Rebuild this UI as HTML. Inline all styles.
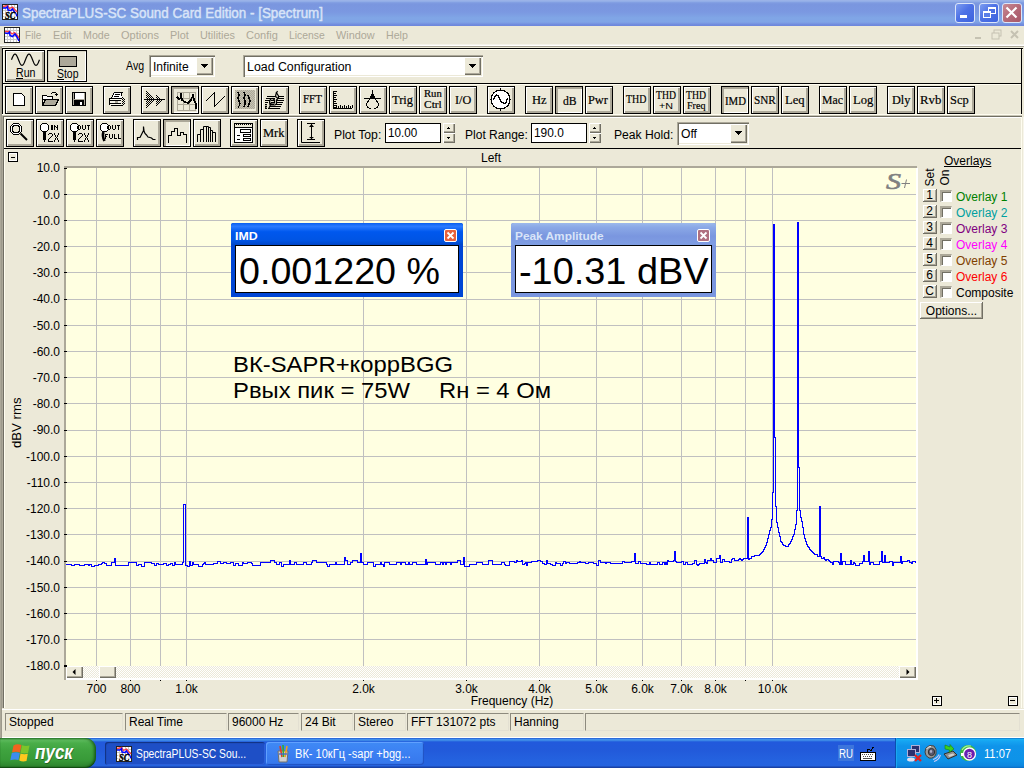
<!DOCTYPE html><html><head><meta charset="utf-8"><style>
html,body{margin:0;padding:0;width:1024px;height:768px;overflow:hidden;background:#ECE9D8;}
body{position:relative;font-family:"Liberation Sans",sans-serif;}
div{position:absolute;box-sizing:content-box;}
svg{position:absolute;}
.bn{background:#ECE9D8;border:1px solid #000;box-shadow:inset 1px 1px 0 #fff, inset -2px -2px 0 #ACA899;padding:1px;}
.bp{background:#ECE9D8;border:1px solid #000;box-shadow:inset 2px 2px 0 #ACA899, inset -1px -1px 0 #fff;padding:1px;}
.sunk{background:#fff;box-shadow:inset 1px 1px 0 #ACA899, inset 2px 2px 0 #716F64, inset -1px -1px 0 #fff, inset -2px -2px 0 #ECE9D8;}
.lbl{font-family:"Liberation Serif",serif;color:#000;text-align:center;}
</style></head><body>

<div style="left:0px;top:0px;width:1024px;height:26px;background:linear-gradient(to bottom,#97AEE6 0px,#9DB7EA 1px,#86A3E4 2px,#7A96DF 4px,#7B98E1 12px,#80A6E6 18px,#80A4E6 22px,#7591E0 24px,#6E88DC 25px,#6E88DC 26px);"></div>
<svg style="position:absolute;left:2px;top:4px" width="16" height="16" viewBox="0 0 16 16"  shape-rendering="auto"><rect x="0" y="0" width="16" height="16" fill="#222"/><rect x="1" y="1" width="14" height="14" fill="#fff"/><rect x="3" y="1" width="1" height="14" fill="#C8C8C8"/><rect x="1" y="3" width="14" height="1" fill="#C8C8C8"/><rect x="6" y="1" width="1" height="14" fill="#C8C8C8"/><rect x="1" y="6" width="14" height="1" fill="#C8C8C8"/><rect x="9" y="1" width="1" height="14" fill="#C8C8C8"/><rect x="1" y="9" width="14" height="1" fill="#C8C8C8"/><rect x="12" y="1" width="1" height="14" fill="#C8C8C8"/><rect x="1" y="12" width="14" height="1" fill="#C8C8C8"/><polyline points="1,2.5 5.5,1.5 7.5,4.5 10.5,3 15,8" fill="none" stroke="#FF4040" stroke-width="1.3"/><polyline points="1,4 4,4 5.5,2.5 6,6 9,6.5 10.5,5 13.5,9.5 15,12" fill="none" stroke="#0000FF" stroke-width="1.5"/><rect x="2" y="9" width="12" height="6" fill="#fff" opacity="0.6"/><text x="3" y="14.8" font-family="Liberation Serif" font-style="italic" font-weight="bold" font-size="9.5" fill="#000" stroke="#000" stroke-width="0.4" textLength="10.5" lengthAdjust="spacingAndGlyphs">SC</text></svg>
<svg style="position:absolute;left:20px;top:2px" width="305" height="20"><text x="2" y="16" font-family="Liberation Sans" font-weight="normal" font-style="normal" font-size="14" fill="#D8E4F8" stroke="#D8E4F8" stroke-width="0.45" textLength="301" lengthAdjust="spacingAndGlyphs">SpectraPLUS-SC Sound Card Edition - [Spectrum]</text></svg>
<div style="left:955px;top:3px;width:18px;height:18px;border:1px solid #DCE6FA;border-radius:3px;background:linear-gradient(135deg,#7D9DF0 0%,#4E72E6 45%,#3C62DE 100%);"></div>
<div style="left:979px;top:3px;width:18px;height:18px;border:1px solid #DCE6FA;border-radius:3px;background:linear-gradient(135deg,#7D9DF0 0%,#4E72E6 45%,#3C62DE 100%);"></div>
<div style="left:1002px;top:3px;width:18px;height:18px;border:1px solid #DCE6FA;border-radius:3px;background:linear-gradient(135deg,#C88A94 0%,#B56A78 50%,#A85868 100%);"></div>
<svg style="position:absolute;left:955px;top:3px" width="21" height="21" viewBox="0 0 21 21" shape-rendering="crispEdges" ><rect x="5" y="12" width="7" height="3" fill="#fff"/></svg>
<svg style="position:absolute;left:979px;top:3px" width="21" height="21" viewBox="0 0 21 21"  shape-rendering="crispEdges"><rect x="9.5" y="4.5" width="7" height="6" fill="none" stroke="#fff" stroke-width="1"/><rect x="9" y="4" width="8" height="2" fill="#fff"/><rect x="4.5" y="8.5" width="7" height="6" fill="#5A7EE8" stroke="#fff" stroke-width="1"/><rect x="4" y="8" width="8" height="2" fill="#fff"/></svg>
<svg style="position:absolute;left:1002px;top:3px" width="21" height="21" viewBox="0 0 21 21"  shape-rendering="auto"><path d="M4.5,4.5 L14.5,14.5 M14.5,4.5 L4.5,14.5" stroke="#fff" stroke-width="2.2"/></svg>
<div style="left:0px;top:26px;width:1024px;height:19px;background:#ECE9D8;"></div>
<svg style="position:absolute;left:4px;top:27px" width="16" height="16" viewBox="0 0 16 16"  shape-rendering="auto"><rect x="0" y="0" width="16" height="16" fill="#222"/><rect x="1" y="1" width="14" height="14" fill="#fff"/><rect x="3" y="1" width="1" height="14" fill="#C8C8C8"/><rect x="1" y="3" width="14" height="1" fill="#C8C8C8"/><rect x="6" y="1" width="1" height="14" fill="#C8C8C8"/><rect x="1" y="6" width="14" height="1" fill="#C8C8C8"/><rect x="9" y="1" width="1" height="14" fill="#C8C8C8"/><rect x="1" y="9" width="14" height="1" fill="#C8C8C8"/><rect x="12" y="1" width="1" height="14" fill="#C8C8C8"/><rect x="1" y="12" width="14" height="1" fill="#C8C8C8"/><polyline points="1,4.5 5.5,4.3 8,7 10.5,5.5 13.5,8.5 15,11" fill="none" stroke="#FF4040" stroke-width="1.3"/><polyline points="1,6 4,6.5 5.5,5 6,8.5 8.5,9.5 11,7 13,10 15,14" fill="none" stroke="#0000FF" stroke-width="1.5"/><rect x="1" y="15" width="14" height="1" fill="#222"/></svg>
<svg style="position:absolute;left:23.2px;top:25.9px" width="20.3" height="17"><text x="2" y="13" font-family="Liberation Sans" font-weight="normal" font-style="normal" font-size="11" fill="#ACA899" textLength="16.3" lengthAdjust="spacingAndGlyphs">File</text></svg>
<svg style="position:absolute;left:50.8px;top:25.9px" width="22.700000000000003" height="17"><text x="2" y="13" font-family="Liberation Sans" font-weight="normal" font-style="normal" font-size="11" fill="#ACA899" textLength="18.700000000000003" lengthAdjust="spacingAndGlyphs">Edit</text></svg>
<svg style="position:absolute;left:80.8px;top:25.9px" width="30.700000000000003" height="17"><text x="2" y="13" font-family="Liberation Sans" font-weight="normal" font-style="normal" font-size="11" fill="#ACA899" textLength="26.700000000000003" lengthAdjust="spacingAndGlyphs">Mode</text></svg>
<svg style="position:absolute;left:118.9px;top:25.9px" width="41.900000000000006" height="17"><text x="2" y="13" font-family="Liberation Sans" font-weight="normal" font-style="normal" font-size="11" fill="#ACA899" textLength="37.900000000000006" lengthAdjust="spacingAndGlyphs">Options</text></svg>
<svg style="position:absolute;left:167.7px;top:25.9px" width="22.700000000000017" height="17"><text x="2" y="13" font-family="Liberation Sans" font-weight="normal" font-style="normal" font-size="11" fill="#ACA899" textLength="18.700000000000017" lengthAdjust="spacingAndGlyphs">Plot</text></svg>
<svg style="position:absolute;left:197.7px;top:25.9px" width="39.0" height="17"><text x="2" y="13" font-family="Liberation Sans" font-weight="normal" font-style="normal" font-size="11" fill="#ACA899" textLength="35.0" lengthAdjust="spacingAndGlyphs">Utilities</text></svg>
<svg style="position:absolute;left:244.0px;top:25.9px" width="35.80000000000001" height="17"><text x="2" y="13" font-family="Liberation Sans" font-weight="normal" font-style="normal" font-size="11" fill="#ACA899" textLength="31.80000000000001" lengthAdjust="spacingAndGlyphs">Config</text></svg>
<svg style="position:absolute;left:286.7px;top:25.9px" width="39.80000000000001" height="17"><text x="2" y="13" font-family="Liberation Sans" font-weight="normal" font-style="normal" font-size="11" fill="#ACA899" textLength="35.80000000000001" lengthAdjust="spacingAndGlyphs">License</text></svg>
<svg style="position:absolute;left:333.8px;top:25.9px" width="42.69999999999999" height="17"><text x="2" y="13" font-family="Liberation Sans" font-weight="normal" font-style="normal" font-size="11" fill="#ACA899" textLength="38.69999999999999" lengthAdjust="spacingAndGlyphs">Window</text></svg>
<svg style="position:absolute;left:383.9px;top:25.9px" width="25.900000000000034" height="17"><text x="2" y="13" font-family="Liberation Sans" font-weight="normal" font-style="normal" font-size="11" fill="#ACA899" textLength="21.900000000000034" lengthAdjust="spacingAndGlyphs">Help</text></svg>
<svg style="position:absolute;left:972px;top:27px" width="50" height="17" viewBox="0 0 50 17"  shape-rendering="auto"><rect x="3" y="10" width="6" height="2" fill="#C5C2B2"/><rect x="22" y="3" width="7" height="6" fill="none" stroke="#C5C2B2"/><rect x="20" y="6" width="7" height="6" fill="#ECE9D8" stroke="#C5C2B2"/><path d="M39,4 L46,11 M46,4 L39,11" stroke="#C5C2B2" stroke-width="2"/></svg>
<div style="left:0px;top:44px;width:1024px;height:1px;background:#F5F3EA;"></div>
<div style="left:0px;top:45px;width:1024px;height:1px;background:#fff;"></div>
<div style="left:0px;top:46px;width:1024px;height:1px;background:#ACA899;"></div>
<div style="left:0px;top:47px;width:1024px;height:689px;background:#ECE9D8;"></div>
<div style="left:0px;top:47px;width:1px;height:689px;background:#ACA899;"></div>
<div style="left:1px;top:47px;width:1px;height:689px;background:#9D9A8C;"></div>
<div style="left:2px;top:48px;width:1020px;height:68px;border-left:1px solid #000;border-top:1px solid #000;box-shadow:inset 1px 1px 0 #FFFDF0;"></div>
<div style="left:2px;top:83px;width:1019px;height:1px;background:#000;"></div>
<div style="left:3px;top:84px;width:1018px;height:1px;background:#FFFDF0;"></div>
<div style="left:1021px;top:48px;width:1px;height:68px;background:#000;"></div>
<div style="left:2px;top:114px;width:1020px;height:1px;background:#FFFDF0;"></div>
<div style="left:2px;top:115px;width:1020px;height:1px;background:#C8C5B5;"></div>
<div style="left:2px;top:116px;width:1020px;height:1px;background:#716F64;"></div>
<div style="left:4px;top:117px;width:1018px;height:1px;background:#fff;"></div>
<div style="left:2px;top:116px;width:1px;height:620px;background:#ACA899;"></div>
<div style="left:3px;top:116px;width:1px;height:620px;background:#716F64;"></div>
<div style="left:4px;top:117px;width:1px;height:619px;background:#FFFDF0;"></div>
<div class="bn" style="left:5px;top:50px;width:36px;height:28px"></div>
<svg style="position:absolute;left:0px;top:48px" width="50" height="25" viewBox="0 0 50 25"  shape-rendering="auto"><polyline points="11.50,11.70 11.75,11.07 12.00,10.45 12.25,9.85 12.50,9.27 12.75,8.72 13.00,8.21 13.25,7.74 13.50,7.32 13.75,6.96 14.00,6.65 14.25,6.41 14.50,6.24 14.75,6.14 15.00,6.10 15.25,6.14 15.50,6.24 15.75,6.41 16.00,6.65 16.25,6.96 16.50,7.32 16.75,7.74 17.00,8.21 17.25,8.72 17.50,9.27 17.75,9.85 18.00,10.45 18.25,11.07 18.50,11.70 18.75,12.33 19.00,12.95 19.25,13.55 19.50,14.13 19.75,14.68 20.00,15.19 20.25,15.66 20.50,16.08 20.75,16.44 21.00,16.75 21.25,16.99 21.50,17.16 21.75,17.26 22.00,17.30 22.25,17.26 22.50,17.16 22.75,16.99 23.00,16.75 23.25,16.44 23.50,16.08 23.75,15.66 24.00,15.19 24.25,14.68 24.50,14.13 24.75,13.55 25.00,12.95 25.25,12.33 25.50,11.70 25.75,11.07 26.00,10.45 26.25,9.85 26.50,9.27 26.75,8.72 27.00,8.21 27.25,7.74 27.50,7.32 27.75,6.96 28.00,6.65 28.25,6.41 28.50,6.24 28.75,6.14 29.00,6.10 29.25,6.14 29.50,6.24 29.75,6.41 30.00,6.65 30.25,6.96 30.50,7.32 30.75,7.74 31.00,8.21 31.25,8.72 31.50,9.27 31.75,9.85 32.00,10.45 32.25,11.07 32.50,11.70 32.75,12.33 33.00,12.95 33.25,13.55 33.50,14.13 33.75,14.68 34.00,15.19 34.25,15.66 34.50,16.08 34.75,16.44 35.00,16.75 35.25,16.99 35.50,17.16 35.75,17.26 36.00,17.30 36.25,17.26 36.50,17.16 36.75,16.99 37.00,16.75 37.25,16.44 37.50,16.08 37.75,15.66 38.00,15.19 38.25,14.68 38.50,14.13 38.75,13.55 39.00,12.95 39.25,12.33 39.50,11.70" fill="none" stroke="#000" stroke-width="1.2"/></svg>
<svg style="position:absolute;left:14px;top:62.8px" width="23.5" height="18"><text x="2" y="14" font-family="Liberation Sans" font-weight="normal" font-style="normal" font-size="12" fill="#000" textLength="19.5" lengthAdjust="spacingAndGlyphs">Run</text></svg>
<div style="left:16px;top:78px;width:7px;height:1px;background:#000;"></div>
<div style="left:47px;top:50px;width:38px;height:30px;background:#ECE9D8;border:1px solid #000;box-shadow:inset 1px 1px 0 #D8D4C4, inset -1px -1px 0 #fff;"></div>
<div style="left:59px;top:56px;width:16px;height:9px;background:#ACA899;border:1px solid #000;"></div>
<svg style="position:absolute;left:54.5px;top:63.5px" width="25.5" height="18"><text x="2" y="14" font-family="Liberation Sans" font-weight="normal" font-style="normal" font-size="12" fill="#000" textLength="21.5" lengthAdjust="spacingAndGlyphs">Stop</text></svg>
<div style="left:57px;top:79px;width:7px;height:1px;background:#000;"></div>
<svg style="position:absolute;left:124.4px;top:56.400000000000006px" width="22.099999999999994" height="18"><text x="2" y="14" font-family="Liberation Sans" font-weight="normal" font-style="normal" font-size="12" fill="#000" textLength="18.099999999999994" lengthAdjust="spacingAndGlyphs">Avg</text></svg>
<div style="left:149px;top:55px;width:66px;height:22px;background:#fff;box-shadow:inset 1px 1px 0 #ACA899, inset 2px 2px 0 #716F64, inset -1px -1px 0 #fff, inset -2px -2px 0 #ECE9D8;"></div>
<div style="left:196px;top:57px;width:17px;height:18px;background:#ECE9D8;box-shadow:inset 1px 1px 0 #fff, inset -1px -1px 0 #716F64, inset -2px -2px 0 #ACA899;"></div>
<svg style="position:absolute;left:201px;top:64px" width="7" height="4" viewBox="0 0 7 4" shape-rendering="crispEdges" ><rect x="0" y="0" width="7" height="1"/><rect x="1" y="1" width="5" height="1"/><rect x="2" y="2" width="3" height="1"/><rect x="3" y="3" width="1" height="1"/></svg>
<svg style="position:absolute;left:150.7px;top:56.8px" width="39.60000000000002" height="18"><text x="2" y="14" font-family="Liberation Sans" font-weight="normal" font-style="normal" font-size="12" fill="#000" textLength="35.60000000000002" lengthAdjust="spacingAndGlyphs">Infinite</text></svg>
<div style="left:243px;top:55px;width:240px;height:22px;background:#fff;box-shadow:inset 1px 1px 0 #ACA899, inset 2px 2px 0 #716F64, inset -1px -1px 0 #fff, inset -2px -2px 0 #ECE9D8;"></div>
<div style="left:464px;top:57px;width:17px;height:18px;background:#ECE9D8;box-shadow:inset 1px 1px 0 #fff, inset -1px -1px 0 #716F64, inset -2px -2px 0 #ACA899;"></div>
<svg style="position:absolute;left:469px;top:64px" width="7" height="4" viewBox="0 0 7 4" shape-rendering="crispEdges" ><rect x="0" y="0" width="7" height="1"/><rect x="1" y="1" width="5" height="1"/><rect x="2" y="2" width="3" height="1"/><rect x="3" y="3" width="1" height="1"/></svg>
<svg style="position:absolute;left:245px;top:57px" width="108.5" height="18"><text x="2" y="14" font-family="Liberation Sans" font-weight="normal" font-style="normal" font-size="12" fill="#000" textLength="104.5" lengthAdjust="spacingAndGlyphs">Load Configuration</text></svg>
<div class="bn" style="left:5px;top:86px;width:24px;height:24px"></div>
<div class="bn" style="left:35px;top:86px;width:24px;height:24px"></div>
<div class="bn" style="left:65px;top:86px;width:24px;height:24px"></div>
<div class="bn" style="left:103px;top:86px;width:24px;height:24px"></div>
<div class="bn" style="left:141px;top:86px;width:24px;height:24px"></div>
<div class="bp" style="left:171px;top:86px;width:24px;height:24px"></div>
<div class="bn" style="left:201px;top:86px;width:24px;height:24px"></div>
<div class="bn" style="left:231px;top:86px;width:24px;height:24px"></div>
<div class="bn" style="left:261px;top:86px;width:24px;height:24px"></div>
<div class="bn" style="left:299px;top:86px;width:24px;height:24px"></div>
<div class="bn" style="left:329px;top:86px;width:24px;height:24px"></div>
<div class="bn" style="left:359px;top:86px;width:24px;height:24px"></div>
<div class="bn" style="left:389px;top:86px;width:24px;height:24px"></div>
<div class="bn" style="left:419px;top:86px;width:24px;height:24px"></div>
<div class="bn" style="left:449px;top:86px;width:24px;height:24px"></div>
<div class="bn" style="left:487px;top:86px;width:24px;height:24px"></div>
<div class="bn" style="left:525px;top:86px;width:24px;height:24px"></div>
<div class="bp" style="left:555px;top:86px;width:24px;height:24px"></div>
<div class="bn" style="left:585px;top:86px;width:24px;height:24px"></div>
<div class="bn" style="left:623px;top:86px;width:24px;height:24px"></div>
<div class="bn" style="left:653px;top:86px;width:24px;height:24px"></div>
<div class="bn" style="left:683px;top:86px;width:24px;height:24px"></div>
<div class="bp" style="left:721px;top:86px;width:24px;height:24px"></div>
<div class="bn" style="left:751px;top:86px;width:24px;height:24px"></div>
<div class="bn" style="left:781px;top:86px;width:24px;height:24px"></div>
<div class="bn" style="left:819px;top:86px;width:24px;height:24px"></div>
<div class="bn" style="left:849px;top:86px;width:24px;height:24px"></div>
<div class="bn" style="left:887px;top:86px;width:24px;height:24px"></div>
<div class="bn" style="left:917px;top:86px;width:24px;height:24px"></div>
<div class="bn" style="left:947px;top:86px;width:24px;height:24px"></div>
<svg style="position:absolute;left:5px;top:86px" width="28" height="28" viewBox="0 0 28 28" shape-rendering="crispEdges" ><path d="M8.5,7.5 H16.5 L19.5,10.5 V19.5 H8.5 Z" fill="#fff" stroke="#000"/><rect x="17" y="8" width="1" height="1" fill="#000"/></svg>
<svg style="position:absolute;left:35px;top:86px" width="28" height="28" viewBox="0 0 28 28" shape-rendering="crispEdges" ><path d="M7.5,9.5 H11.5 L12.5,10.5 H17.5 V13.5 H7.5 Z" fill="#fff" stroke="#000"/><path d="M7.5,19.5 L10.5,13.5 H23.5 L20.5,19.5 Z" fill="#ACA899" stroke="#000"/><path d="M7.5,13 V19.5" stroke="#000"/><path d="M15.5,8.5 Q18,5 21,7 L21,9" fill="none" stroke="#000"/><path d="M19,8 L23,8 L21,10 Z" fill="#000"/></svg>
<svg style="position:absolute;left:65px;top:86px" width="28" height="28" viewBox="0 0 28 28" shape-rendering="crispEdges" ><rect x="7" y="6" width="14" height="14" fill="#000"/><rect x="8" y="7" width="1" height="12" fill="#ACA899"/><rect x="10" y="7" width="9" height="6" fill="#fff"/><rect x="10" y="15" width="8" height="4" fill="#000"/><rect x="15" y="16" width="2" height="3" fill="#fff"/><rect x="20" y="8" width="0" height="0"/><rect x="19" y="7" width="1" height="12" fill="#ACA899"/><rect x="9" y="13" width="10" height="1" fill="#ACA899"/></svg>
<svg style="position:absolute;left:103px;top:86px" width="28" height="28" viewBox="0 0 28 28" shape-rendering="crispEdges" ><rect x="11" y="6" width="9" height="1" fill="#000"/><rect x="10" y="7" width="9" height="5" fill="#fff"/><rect x="10" y="7" width="1" height="2" fill="#000"/><rect x="9" y="9" width="1" height="2" fill="#000"/><rect x="8" y="11" width="1" height="1" fill="#000"/><rect x="18" y="7" width="1" height="3" fill="#000"/><rect x="12" y="8" width="5" height="1" fill="#000"/><rect x="11" y="10" width="5" height="1" fill="#000"/><rect x="6" y="12" width="13" height="1" fill="#000"/><rect x="6" y="13" width="1" height="6" fill="#000"/><rect x="7" y="13" width="11" height="1" fill="#FFFDF0"/><rect x="7" y="14" width="11" height="1" fill="#000"/><rect x="7" y="15" width="11" height="2" fill="#F5F3E8"/><rect x="12" y="15" width="3" height="2" fill="#ACA899"/><rect x="7" y="17" width="11" height="1" fill="#000"/><rect x="7" y="18" width="11" height="1" fill="#FFFDF0"/><rect x="8" y="19" width="11" height="1" fill="#000"/><rect x="19" y="11" width="1" height="1" fill="#000"/><rect x="20" y="12" width="1" height="1" fill="#000"/><rect x="19" y="13" width="1" height="1" fill="#000"/><rect x="21" y="13" width="1" height="1" fill="#000"/><rect x="20" y="14" width="1" height="1" fill="#000"/><rect x="19" y="15" width="1" height="1" fill="#000"/><rect x="21" y="15" width="1" height="1" fill="#000"/><rect x="20" y="16" width="1" height="1" fill="#000"/><rect x="19" y="17" width="1" height="1" fill="#000"/><rect x="21" y="17" width="1" height="1" fill="#000"/><rect x="20" y="18" width="1" height="1" fill="#000"/><rect x="19" y="19" width="1" height="1" fill="#000"/></svg>
<svg style="position:absolute;left:141px;top:86px" width="28" height="28" viewBox="0 0 28 28" shape-rendering="crispEdges" ><rect x="5" y="5" width="1" height="1" fill="#000"/><rect x="5" y="7" width="1" height="1" fill="#000"/><rect x="5" y="9" width="1" height="1" fill="#000"/><rect x="5" y="11" width="1" height="1" fill="#000"/><rect x="5" y="13" width="1" height="1" fill="#000"/><rect x="5" y="15" width="1" height="1" fill="#000"/><rect x="5" y="17" width="1" height="1" fill="#000"/><rect x="5" y="19" width="1" height="1" fill="#000"/><rect x="5" y="21" width="1" height="1" fill="#000"/><rect x="6" y="6" width="1" height="1" fill="#000"/><rect x="6" y="8" width="1" height="1" fill="#000"/><rect x="6" y="10" width="1" height="1" fill="#000"/><rect x="6" y="12" width="1" height="1" fill="#000"/><rect x="6" y="14" width="1" height="1" fill="#000"/><rect x="6" y="16" width="1" height="1" fill="#000"/><rect x="6" y="18" width="1" height="1" fill="#000"/><rect x="6" y="20" width="1" height="1" fill="#000"/><rect x="7" y="7" width="1" height="1" fill="#000"/><rect x="7" y="9" width="1" height="1" fill="#000"/><rect x="7" y="11" width="1" height="1" fill="#000"/><rect x="7" y="13" width="1" height="1" fill="#000"/><rect x="7" y="15" width="1" height="1" fill="#000"/><rect x="7" y="17" width="1" height="1" fill="#000"/><rect x="7" y="19" width="1" height="1" fill="#000"/><rect x="8" y="8" width="1" height="1" fill="#000"/><rect x="8" y="10" width="1" height="1" fill="#000"/><rect x="8" y="12" width="1" height="1" fill="#000"/><rect x="8" y="14" width="1" height="1" fill="#000"/><rect x="8" y="16" width="1" height="1" fill="#000"/><rect x="8" y="18" width="1" height="1" fill="#000"/><rect x="9" y="9" width="1" height="1" fill="#000"/><rect x="9" y="11" width="1" height="1" fill="#000"/><rect x="9" y="13" width="1" height="1" fill="#000"/><rect x="9" y="15" width="1" height="1" fill="#000"/><rect x="9" y="17" width="1" height="1" fill="#000"/><rect x="10" y="10" width="1" height="1" fill="#000"/><rect x="10" y="12" width="1" height="1" fill="#000"/><rect x="10" y="14" width="1" height="1" fill="#000"/><rect x="10" y="16" width="1" height="1" fill="#000"/><rect x="11" y="11" width="1" height="1" fill="#000"/><rect x="11" y="13" width="1" height="1" fill="#000"/><rect x="11" y="15" width="1" height="1" fill="#000"/><rect x="12" y="12" width="1" height="1" fill="#000"/><rect x="12" y="14" width="1" height="1" fill="#000"/><rect x="15" y="9" width="1" height="1" fill="#000"/><rect x="15" y="11" width="1" height="1" fill="#000"/><rect x="15" y="13" width="1" height="1" fill="#000"/><rect x="15" y="15" width="1" height="1" fill="#000"/><rect x="15" y="17" width="1" height="1" fill="#000"/><rect x="15" y="19" width="1" height="1" fill="#000"/><rect x="16" y="10" width="1" height="1" fill="#000"/><rect x="16" y="12" width="1" height="1" fill="#000"/><rect x="16" y="14" width="1" height="1" fill="#000"/><rect x="16" y="16" width="1" height="1" fill="#000"/><rect x="16" y="18" width="1" height="1" fill="#000"/><rect x="17" y="11" width="1" height="1" fill="#000"/><rect x="17" y="13" width="1" height="1" fill="#000"/><rect x="17" y="15" width="1" height="1" fill="#000"/><rect x="17" y="17" width="1" height="1" fill="#000"/><rect x="18" y="12" width="1" height="1" fill="#000"/><rect x="18" y="14" width="1" height="1" fill="#000"/><rect x="18" y="16" width="1" height="1" fill="#000"/><rect x="19" y="13" width="1" height="1" fill="#000"/><rect x="19" y="15" width="1" height="1" fill="#000"/><rect x="20" y="14" width="1" height="1" fill="#000"/><rect x="3" y="13" width="21" height="1" fill="#000"/></svg>
<svg style="position:absolute;left:172px;top:87px" width="28" height="28" viewBox="0 0 28 28" shape-rendering="crispEdges" ><rect x="5.5" y="5.5" width="18" height="18" fill="none" stroke="#ACA899"/><path d="M11.5,5 V24 M17.5,5 V24 M5,11.5 H24 M5,17.5 H24" stroke="#ACA899"/><path d="M5,10 L7,12 L9,11 L9,6 L10,13 L13,15 L16,16 L19,13 L21,8 L22,13 L24,17 L24,22" fill="none" stroke="#000" stroke-width="1.6"/></svg>
<svg style="position:absolute;left:201px;top:86px" width="28" height="28" viewBox="0 0 28 28" shape-rendering="crispEdges" ><path d="M4.5,15.5 L13.5,6.5 V20.5 L23.5,10.5" fill="none" stroke="#000"/></svg>
<svg style="position:absolute;left:231px;top:86px" width="28" height="28" viewBox="0 0 28 28" shape-rendering="crispEdges" ><rect x="4" y="4" width="20" height="19" fill="#ECE9D8"/><rect x="4" y="4" width="1" height="1" fill="#ACA899"/><rect x="6" y="4" width="1" height="1" fill="#ACA899"/><rect x="8" y="4" width="1" height="1" fill="#ACA899"/><rect x="10" y="4" width="1" height="1" fill="#ACA899"/><rect x="12" y="4" width="1" height="1" fill="#ACA899"/><rect x="14" y="4" width="1" height="1" fill="#ACA899"/><rect x="16" y="4" width="1" height="1" fill="#ACA899"/><rect x="18" y="4" width="1" height="1" fill="#ACA899"/><rect x="20" y="4" width="1" height="1" fill="#ACA899"/><rect x="22" y="4" width="1" height="1" fill="#ACA899"/><rect x="5" y="5" width="1" height="1" fill="#ACA899"/><rect x="7" y="5" width="1" height="1" fill="#ACA899"/><rect x="9" y="5" width="1" height="1" fill="#ACA899"/><rect x="11" y="5" width="1" height="1" fill="#ACA899"/><rect x="13" y="5" width="1" height="1" fill="#ACA899"/><rect x="15" y="5" width="1" height="1" fill="#ACA899"/><rect x="17" y="5" width="1" height="1" fill="#ACA899"/><rect x="19" y="5" width="1" height="1" fill="#ACA899"/><rect x="21" y="5" width="1" height="1" fill="#ACA899"/><rect x="23" y="5" width="1" height="1" fill="#ACA899"/><rect x="4" y="6" width="1" height="1" fill="#ACA899"/><rect x="6" y="6" width="1" height="1" fill="#ACA899"/><rect x="8" y="6" width="1" height="1" fill="#ACA899"/><rect x="10" y="6" width="1" height="1" fill="#ACA899"/><rect x="12" y="6" width="1" height="1" fill="#ACA899"/><rect x="14" y="6" width="1" height="1" fill="#ACA899"/><rect x="16" y="6" width="1" height="1" fill="#ACA899"/><rect x="18" y="6" width="1" height="1" fill="#ACA899"/><rect x="20" y="6" width="1" height="1" fill="#ACA899"/><rect x="22" y="6" width="1" height="1" fill="#ACA899"/><rect x="5" y="7" width="1" height="1" fill="#ACA899"/><rect x="7" y="7" width="1" height="1" fill="#ACA899"/><rect x="9" y="7" width="1" height="1" fill="#ACA899"/><rect x="11" y="7" width="1" height="1" fill="#ACA899"/><rect x="13" y="7" width="1" height="1" fill="#ACA899"/><rect x="15" y="7" width="1" height="1" fill="#ACA899"/><rect x="17" y="7" width="1" height="1" fill="#ACA899"/><rect x="19" y="7" width="1" height="1" fill="#ACA899"/><rect x="21" y="7" width="1" height="1" fill="#ACA899"/><rect x="23" y="7" width="1" height="1" fill="#ACA899"/><rect x="4" y="8" width="1" height="1" fill="#ACA899"/><rect x="6" y="8" width="1" height="1" fill="#ACA899"/><rect x="8" y="8" width="1" height="1" fill="#ACA899"/><rect x="10" y="8" width="1" height="1" fill="#ACA899"/><rect x="12" y="8" width="1" height="1" fill="#ACA899"/><rect x="14" y="8" width="1" height="1" fill="#ACA899"/><rect x="16" y="8" width="1" height="1" fill="#ACA899"/><rect x="18" y="8" width="1" height="1" fill="#ACA899"/><rect x="20" y="8" width="1" height="1" fill="#ACA899"/><rect x="22" y="8" width="1" height="1" fill="#ACA899"/><rect x="5" y="9" width="1" height="1" fill="#ACA899"/><rect x="7" y="9" width="1" height="1" fill="#ACA899"/><rect x="9" y="9" width="1" height="1" fill="#ACA899"/><rect x="11" y="9" width="1" height="1" fill="#ACA899"/><rect x="13" y="9" width="1" height="1" fill="#ACA899"/><rect x="15" y="9" width="1" height="1" fill="#ACA899"/><rect x="17" y="9" width="1" height="1" fill="#ACA899"/><rect x="19" y="9" width="1" height="1" fill="#ACA899"/><rect x="21" y="9" width="1" height="1" fill="#ACA899"/><rect x="23" y="9" width="1" height="1" fill="#ACA899"/><rect x="4" y="10" width="1" height="1" fill="#ACA899"/><rect x="6" y="10" width="1" height="1" fill="#ACA899"/><rect x="8" y="10" width="1" height="1" fill="#ACA899"/><rect x="10" y="10" width="1" height="1" fill="#ACA899"/><rect x="12" y="10" width="1" height="1" fill="#ACA899"/><rect x="14" y="10" width="1" height="1" fill="#ACA899"/><rect x="16" y="10" width="1" height="1" fill="#ACA899"/><rect x="18" y="10" width="1" height="1" fill="#ACA899"/><rect x="20" y="10" width="1" height="1" fill="#ACA899"/><rect x="22" y="10" width="1" height="1" fill="#ACA899"/><rect x="5" y="11" width="1" height="1" fill="#ACA899"/><rect x="7" y="11" width="1" height="1" fill="#ACA899"/><rect x="9" y="11" width="1" height="1" fill="#ACA899"/><rect x="11" y="11" width="1" height="1" fill="#ACA899"/><rect x="13" y="11" width="1" height="1" fill="#ACA899"/><rect x="15" y="11" width="1" height="1" fill="#ACA899"/><rect x="17" y="11" width="1" height="1" fill="#ACA899"/><rect x="19" y="11" width="1" height="1" fill="#ACA899"/><rect x="21" y="11" width="1" height="1" fill="#ACA899"/><rect x="23" y="11" width="1" height="1" fill="#ACA899"/><rect x="4" y="12" width="1" height="1" fill="#ACA899"/><rect x="6" y="12" width="1" height="1" fill="#ACA899"/><rect x="8" y="12" width="1" height="1" fill="#ACA899"/><rect x="10" y="12" width="1" height="1" fill="#ACA899"/><rect x="12" y="12" width="1" height="1" fill="#ACA899"/><rect x="14" y="12" width="1" height="1" fill="#ACA899"/><rect x="16" y="12" width="1" height="1" fill="#ACA899"/><rect x="18" y="12" width="1" height="1" fill="#ACA899"/><rect x="20" y="12" width="1" height="1" fill="#ACA899"/><rect x="22" y="12" width="1" height="1" fill="#ACA899"/><rect x="5" y="13" width="1" height="1" fill="#ACA899"/><rect x="7" y="13" width="1" height="1" fill="#ACA899"/><rect x="9" y="13" width="1" height="1" fill="#ACA899"/><rect x="11" y="13" width="1" height="1" fill="#ACA899"/><rect x="13" y="13" width="1" height="1" fill="#ACA899"/><rect x="15" y="13" width="1" height="1" fill="#ACA899"/><rect x="17" y="13" width="1" height="1" fill="#ACA899"/><rect x="19" y="13" width="1" height="1" fill="#ACA899"/><rect x="21" y="13" width="1" height="1" fill="#ACA899"/><rect x="23" y="13" width="1" height="1" fill="#ACA899"/><rect x="4" y="14" width="1" height="1" fill="#ACA899"/><rect x="6" y="14" width="1" height="1" fill="#ACA899"/><rect x="8" y="14" width="1" height="1" fill="#ACA899"/><rect x="10" y="14" width="1" height="1" fill="#ACA899"/><rect x="12" y="14" width="1" height="1" fill="#ACA899"/><rect x="14" y="14" width="1" height="1" fill="#ACA899"/><rect x="16" y="14" width="1" height="1" fill="#ACA899"/><rect x="18" y="14" width="1" height="1" fill="#ACA899"/><rect x="20" y="14" width="1" height="1" fill="#ACA899"/><rect x="22" y="14" width="1" height="1" fill="#ACA899"/><rect x="5" y="15" width="1" height="1" fill="#ACA899"/><rect x="7" y="15" width="1" height="1" fill="#ACA899"/><rect x="9" y="15" width="1" height="1" fill="#ACA899"/><rect x="11" y="15" width="1" height="1" fill="#ACA899"/><rect x="13" y="15" width="1" height="1" fill="#ACA899"/><rect x="15" y="15" width="1" height="1" fill="#ACA899"/><rect x="17" y="15" width="1" height="1" fill="#ACA899"/><rect x="19" y="15" width="1" height="1" fill="#ACA899"/><rect x="21" y="15" width="1" height="1" fill="#ACA899"/><rect x="23" y="15" width="1" height="1" fill="#ACA899"/><rect x="4" y="16" width="1" height="1" fill="#ACA899"/><rect x="6" y="16" width="1" height="1" fill="#ACA899"/><rect x="8" y="16" width="1" height="1" fill="#ACA899"/><rect x="10" y="16" width="1" height="1" fill="#ACA899"/><rect x="12" y="16" width="1" height="1" fill="#ACA899"/><rect x="14" y="16" width="1" height="1" fill="#ACA899"/><rect x="16" y="16" width="1" height="1" fill="#ACA899"/><rect x="18" y="16" width="1" height="1" fill="#ACA899"/><rect x="20" y="16" width="1" height="1" fill="#ACA899"/><rect x="22" y="16" width="1" height="1" fill="#ACA899"/><rect x="5" y="17" width="1" height="1" fill="#ACA899"/><rect x="7" y="17" width="1" height="1" fill="#ACA899"/><rect x="9" y="17" width="1" height="1" fill="#ACA899"/><rect x="11" y="17" width="1" height="1" fill="#ACA899"/><rect x="13" y="17" width="1" height="1" fill="#ACA899"/><rect x="15" y="17" width="1" height="1" fill="#ACA899"/><rect x="17" y="17" width="1" height="1" fill="#ACA899"/><rect x="19" y="17" width="1" height="1" fill="#ACA899"/><rect x="21" y="17" width="1" height="1" fill="#ACA899"/><rect x="23" y="17" width="1" height="1" fill="#ACA899"/><rect x="4" y="18" width="1" height="1" fill="#ACA899"/><rect x="6" y="18" width="1" height="1" fill="#ACA899"/><rect x="8" y="18" width="1" height="1" fill="#ACA899"/><rect x="10" y="18" width="1" height="1" fill="#ACA899"/><rect x="12" y="18" width="1" height="1" fill="#ACA899"/><rect x="14" y="18" width="1" height="1" fill="#ACA899"/><rect x="16" y="18" width="1" height="1" fill="#ACA899"/><rect x="18" y="18" width="1" height="1" fill="#ACA899"/><rect x="20" y="18" width="1" height="1" fill="#ACA899"/><rect x="22" y="18" width="1" height="1" fill="#ACA899"/><rect x="5" y="19" width="1" height="1" fill="#ACA899"/><rect x="7" y="19" width="1" height="1" fill="#ACA899"/><rect x="9" y="19" width="1" height="1" fill="#ACA899"/><rect x="11" y="19" width="1" height="1" fill="#ACA899"/><rect x="13" y="19" width="1" height="1" fill="#ACA899"/><rect x="15" y="19" width="1" height="1" fill="#ACA899"/><rect x="17" y="19" width="1" height="1" fill="#ACA899"/><rect x="19" y="19" width="1" height="1" fill="#ACA899"/><rect x="21" y="19" width="1" height="1" fill="#ACA899"/><rect x="23" y="19" width="1" height="1" fill="#ACA899"/><rect x="4" y="20" width="1" height="1" fill="#ACA899"/><rect x="6" y="20" width="1" height="1" fill="#ACA899"/><rect x="8" y="20" width="1" height="1" fill="#ACA899"/><rect x="10" y="20" width="1" height="1" fill="#ACA899"/><rect x="12" y="20" width="1" height="1" fill="#ACA899"/><rect x="14" y="20" width="1" height="1" fill="#ACA899"/><rect x="16" y="20" width="1" height="1" fill="#ACA899"/><rect x="18" y="20" width="1" height="1" fill="#ACA899"/><rect x="20" y="20" width="1" height="1" fill="#ACA899"/><rect x="22" y="20" width="1" height="1" fill="#ACA899"/><rect x="5" y="21" width="1" height="1" fill="#ACA899"/><rect x="7" y="21" width="1" height="1" fill="#ACA899"/><rect x="9" y="21" width="1" height="1" fill="#ACA899"/><rect x="11" y="21" width="1" height="1" fill="#ACA899"/><rect x="13" y="21" width="1" height="1" fill="#ACA899"/><rect x="15" y="21" width="1" height="1" fill="#ACA899"/><rect x="17" y="21" width="1" height="1" fill="#ACA899"/><rect x="19" y="21" width="1" height="1" fill="#ACA899"/><rect x="21" y="21" width="1" height="1" fill="#ACA899"/><rect x="23" y="21" width="1" height="1" fill="#ACA899"/><rect x="4" y="22" width="1" height="1" fill="#ACA899"/><rect x="6" y="22" width="1" height="1" fill="#ACA899"/><rect x="8" y="22" width="1" height="1" fill="#ACA899"/><rect x="10" y="22" width="1" height="1" fill="#ACA899"/><rect x="12" y="22" width="1" height="1" fill="#ACA899"/><rect x="14" y="22" width="1" height="1" fill="#ACA899"/><rect x="16" y="22" width="1" height="1" fill="#ACA899"/><rect x="18" y="22" width="1" height="1" fill="#ACA899"/><rect x="20" y="22" width="1" height="1" fill="#ACA899"/><rect x="22" y="22" width="1" height="1" fill="#ACA899"/><rect x="5" y="4" width="1" height="1" fill="#C8C5B5"/><rect x="7" y="4" width="1" height="1" fill="#C8C5B5"/><rect x="9" y="4" width="1" height="1" fill="#C8C5B5"/><rect x="11" y="4" width="1" height="1" fill="#C8C5B5"/><rect x="13" y="4" width="1" height="1" fill="#C8C5B5"/><rect x="15" y="4" width="1" height="1" fill="#C8C5B5"/><rect x="17" y="4" width="1" height="1" fill="#C8C5B5"/><rect x="19" y="4" width="1" height="1" fill="#C8C5B5"/><rect x="21" y="4" width="1" height="1" fill="#C8C5B5"/><rect x="23" y="4" width="1" height="1" fill="#C8C5B5"/><rect x="4" y="5" width="1" height="1" fill="#C8C5B5"/><rect x="6" y="5" width="1" height="1" fill="#C8C5B5"/><rect x="8" y="5" width="1" height="1" fill="#C8C5B5"/><rect x="10" y="5" width="1" height="1" fill="#C8C5B5"/><rect x="12" y="5" width="1" height="1" fill="#C8C5B5"/><rect x="14" y="5" width="1" height="1" fill="#C8C5B5"/><rect x="16" y="5" width="1" height="1" fill="#C8C5B5"/><rect x="18" y="5" width="1" height="1" fill="#C8C5B5"/><rect x="20" y="5" width="1" height="1" fill="#C8C5B5"/><rect x="22" y="5" width="1" height="1" fill="#C8C5B5"/><rect x="5" y="6" width="1" height="1" fill="#C8C5B5"/><rect x="7" y="6" width="1" height="1" fill="#C8C5B5"/><rect x="9" y="6" width="1" height="1" fill="#C8C5B5"/><rect x="11" y="6" width="1" height="1" fill="#C8C5B5"/><rect x="13" y="6" width="1" height="1" fill="#C8C5B5"/><rect x="15" y="6" width="1" height="1" fill="#C8C5B5"/><rect x="17" y="6" width="1" height="1" fill="#C8C5B5"/><rect x="19" y="6" width="1" height="1" fill="#C8C5B5"/><rect x="21" y="6" width="1" height="1" fill="#C8C5B5"/><rect x="23" y="6" width="1" height="1" fill="#C8C5B5"/><rect x="4" y="7" width="1" height="1" fill="#C8C5B5"/><rect x="6" y="7" width="1" height="1" fill="#C8C5B5"/><rect x="8" y="7" width="1" height="1" fill="#C8C5B5"/><rect x="10" y="7" width="1" height="1" fill="#C8C5B5"/><rect x="12" y="7" width="1" height="1" fill="#C8C5B5"/><rect x="14" y="7" width="1" height="1" fill="#C8C5B5"/><rect x="16" y="7" width="1" height="1" fill="#C8C5B5"/><rect x="18" y="7" width="1" height="1" fill="#C8C5B5"/><rect x="20" y="7" width="1" height="1" fill="#C8C5B5"/><rect x="22" y="7" width="1" height="1" fill="#C8C5B5"/><rect x="5" y="8" width="1" height="1" fill="#C8C5B5"/><rect x="7" y="8" width="1" height="1" fill="#C8C5B5"/><rect x="9" y="8" width="1" height="1" fill="#C8C5B5"/><rect x="11" y="8" width="1" height="1" fill="#C8C5B5"/><rect x="13" y="8" width="1" height="1" fill="#C8C5B5"/><rect x="15" y="8" width="1" height="1" fill="#C8C5B5"/><rect x="17" y="8" width="1" height="1" fill="#C8C5B5"/><rect x="19" y="8" width="1" height="1" fill="#C8C5B5"/><rect x="21" y="8" width="1" height="1" fill="#C8C5B5"/><rect x="23" y="8" width="1" height="1" fill="#C8C5B5"/><rect x="4" y="9" width="1" height="1" fill="#C8C5B5"/><rect x="6" y="9" width="1" height="1" fill="#C8C5B5"/><rect x="8" y="9" width="1" height="1" fill="#C8C5B5"/><rect x="10" y="9" width="1" height="1" fill="#C8C5B5"/><rect x="12" y="9" width="1" height="1" fill="#C8C5B5"/><rect x="14" y="9" width="1" height="1" fill="#C8C5B5"/><rect x="16" y="9" width="1" height="1" fill="#C8C5B5"/><rect x="18" y="9" width="1" height="1" fill="#C8C5B5"/><rect x="20" y="9" width="1" height="1" fill="#C8C5B5"/><rect x="22" y="9" width="1" height="1" fill="#C8C5B5"/><rect x="5" y="10" width="1" height="1" fill="#C8C5B5"/><rect x="7" y="10" width="1" height="1" fill="#C8C5B5"/><rect x="9" y="10" width="1" height="1" fill="#C8C5B5"/><rect x="11" y="10" width="1" height="1" fill="#C8C5B5"/><rect x="13" y="10" width="1" height="1" fill="#C8C5B5"/><rect x="15" y="10" width="1" height="1" fill="#C8C5B5"/><rect x="17" y="10" width="1" height="1" fill="#C8C5B5"/><rect x="19" y="10" width="1" height="1" fill="#C8C5B5"/><rect x="21" y="10" width="1" height="1" fill="#C8C5B5"/><rect x="23" y="10" width="1" height="1" fill="#C8C5B5"/><rect x="4" y="11" width="1" height="1" fill="#C8C5B5"/><rect x="6" y="11" width="1" height="1" fill="#C8C5B5"/><rect x="8" y="11" width="1" height="1" fill="#C8C5B5"/><rect x="10" y="11" width="1" height="1" fill="#C8C5B5"/><rect x="12" y="11" width="1" height="1" fill="#C8C5B5"/><rect x="14" y="11" width="1" height="1" fill="#C8C5B5"/><rect x="16" y="11" width="1" height="1" fill="#C8C5B5"/><rect x="18" y="11" width="1" height="1" fill="#C8C5B5"/><rect x="20" y="11" width="1" height="1" fill="#C8C5B5"/><rect x="22" y="11" width="1" height="1" fill="#C8C5B5"/><rect x="5" y="12" width="1" height="1" fill="#C8C5B5"/><rect x="7" y="12" width="1" height="1" fill="#C8C5B5"/><rect x="9" y="12" width="1" height="1" fill="#C8C5B5"/><rect x="11" y="12" width="1" height="1" fill="#C8C5B5"/><rect x="13" y="12" width="1" height="1" fill="#C8C5B5"/><rect x="15" y="12" width="1" height="1" fill="#C8C5B5"/><rect x="17" y="12" width="1" height="1" fill="#C8C5B5"/><rect x="19" y="12" width="1" height="1" fill="#C8C5B5"/><rect x="21" y="12" width="1" height="1" fill="#C8C5B5"/><rect x="23" y="12" width="1" height="1" fill="#C8C5B5"/><rect x="4" y="13" width="1" height="1" fill="#C8C5B5"/><rect x="6" y="13" width="1" height="1" fill="#C8C5B5"/><rect x="8" y="13" width="1" height="1" fill="#C8C5B5"/><rect x="10" y="13" width="1" height="1" fill="#C8C5B5"/><rect x="12" y="13" width="1" height="1" fill="#C8C5B5"/><rect x="14" y="13" width="1" height="1" fill="#C8C5B5"/><rect x="16" y="13" width="1" height="1" fill="#C8C5B5"/><rect x="18" y="13" width="1" height="1" fill="#C8C5B5"/><rect x="20" y="13" width="1" height="1" fill="#C8C5B5"/><rect x="22" y="13" width="1" height="1" fill="#C8C5B5"/><rect x="5" y="14" width="1" height="1" fill="#C8C5B5"/><rect x="7" y="14" width="1" height="1" fill="#C8C5B5"/><rect x="9" y="14" width="1" height="1" fill="#C8C5B5"/><rect x="11" y="14" width="1" height="1" fill="#C8C5B5"/><rect x="13" y="14" width="1" height="1" fill="#C8C5B5"/><rect x="15" y="14" width="1" height="1" fill="#C8C5B5"/><rect x="17" y="14" width="1" height="1" fill="#C8C5B5"/><rect x="19" y="14" width="1" height="1" fill="#C8C5B5"/><rect x="21" y="14" width="1" height="1" fill="#C8C5B5"/><rect x="23" y="14" width="1" height="1" fill="#C8C5B5"/><rect x="4" y="15" width="1" height="1" fill="#C8C5B5"/><rect x="6" y="15" width="1" height="1" fill="#C8C5B5"/><rect x="8" y="15" width="1" height="1" fill="#C8C5B5"/><rect x="10" y="15" width="1" height="1" fill="#C8C5B5"/><rect x="12" y="15" width="1" height="1" fill="#C8C5B5"/><rect x="14" y="15" width="1" height="1" fill="#C8C5B5"/><rect x="16" y="15" width="1" height="1" fill="#C8C5B5"/><rect x="18" y="15" width="1" height="1" fill="#C8C5B5"/><rect x="20" y="15" width="1" height="1" fill="#C8C5B5"/><rect x="22" y="15" width="1" height="1" fill="#C8C5B5"/><rect x="5" y="16" width="1" height="1" fill="#C8C5B5"/><rect x="7" y="16" width="1" height="1" fill="#C8C5B5"/><rect x="9" y="16" width="1" height="1" fill="#C8C5B5"/><rect x="11" y="16" width="1" height="1" fill="#C8C5B5"/><rect x="13" y="16" width="1" height="1" fill="#C8C5B5"/><rect x="15" y="16" width="1" height="1" fill="#C8C5B5"/><rect x="17" y="16" width="1" height="1" fill="#C8C5B5"/><rect x="19" y="16" width="1" height="1" fill="#C8C5B5"/><rect x="21" y="16" width="1" height="1" fill="#C8C5B5"/><rect x="23" y="16" width="1" height="1" fill="#C8C5B5"/><rect x="4" y="17" width="1" height="1" fill="#C8C5B5"/><rect x="6" y="17" width="1" height="1" fill="#C8C5B5"/><rect x="8" y="17" width="1" height="1" fill="#C8C5B5"/><rect x="10" y="17" width="1" height="1" fill="#C8C5B5"/><rect x="12" y="17" width="1" height="1" fill="#C8C5B5"/><rect x="14" y="17" width="1" height="1" fill="#C8C5B5"/><rect x="16" y="17" width="1" height="1" fill="#C8C5B5"/><rect x="18" y="17" width="1" height="1" fill="#C8C5B5"/><rect x="20" y="17" width="1" height="1" fill="#C8C5B5"/><rect x="22" y="17" width="1" height="1" fill="#C8C5B5"/><rect x="5" y="18" width="1" height="1" fill="#C8C5B5"/><rect x="7" y="18" width="1" height="1" fill="#C8C5B5"/><rect x="9" y="18" width="1" height="1" fill="#C8C5B5"/><rect x="11" y="18" width="1" height="1" fill="#C8C5B5"/><rect x="13" y="18" width="1" height="1" fill="#C8C5B5"/><rect x="15" y="18" width="1" height="1" fill="#C8C5B5"/><rect x="17" y="18" width="1" height="1" fill="#C8C5B5"/><rect x="19" y="18" width="1" height="1" fill="#C8C5B5"/><rect x="21" y="18" width="1" height="1" fill="#C8C5B5"/><rect x="23" y="18" width="1" height="1" fill="#C8C5B5"/><rect x="4" y="19" width="1" height="1" fill="#C8C5B5"/><rect x="6" y="19" width="1" height="1" fill="#C8C5B5"/><rect x="8" y="19" width="1" height="1" fill="#C8C5B5"/><rect x="10" y="19" width="1" height="1" fill="#C8C5B5"/><rect x="12" y="19" width="1" height="1" fill="#C8C5B5"/><rect x="14" y="19" width="1" height="1" fill="#C8C5B5"/><rect x="16" y="19" width="1" height="1" fill="#C8C5B5"/><rect x="18" y="19" width="1" height="1" fill="#C8C5B5"/><rect x="20" y="19" width="1" height="1" fill="#C8C5B5"/><rect x="22" y="19" width="1" height="1" fill="#C8C5B5"/><rect x="5" y="20" width="1" height="1" fill="#C8C5B5"/><rect x="7" y="20" width="1" height="1" fill="#C8C5B5"/><rect x="9" y="20" width="1" height="1" fill="#C8C5B5"/><rect x="11" y="20" width="1" height="1" fill="#C8C5B5"/><rect x="13" y="20" width="1" height="1" fill="#C8C5B5"/><rect x="15" y="20" width="1" height="1" fill="#C8C5B5"/><rect x="17" y="20" width="1" height="1" fill="#C8C5B5"/><rect x="19" y="20" width="1" height="1" fill="#C8C5B5"/><rect x="21" y="20" width="1" height="1" fill="#C8C5B5"/><rect x="23" y="20" width="1" height="1" fill="#C8C5B5"/><rect x="4" y="21" width="1" height="1" fill="#C8C5B5"/><rect x="6" y="21" width="1" height="1" fill="#C8C5B5"/><rect x="8" y="21" width="1" height="1" fill="#C8C5B5"/><rect x="10" y="21" width="1" height="1" fill="#C8C5B5"/><rect x="12" y="21" width="1" height="1" fill="#C8C5B5"/><rect x="14" y="21" width="1" height="1" fill="#C8C5B5"/><rect x="16" y="21" width="1" height="1" fill="#C8C5B5"/><rect x="18" y="21" width="1" height="1" fill="#C8C5B5"/><rect x="20" y="21" width="1" height="1" fill="#C8C5B5"/><rect x="22" y="21" width="1" height="1" fill="#C8C5B5"/><rect x="5" y="22" width="1" height="1" fill="#C8C5B5"/><rect x="7" y="22" width="1" height="1" fill="#C8C5B5"/><rect x="9" y="22" width="1" height="1" fill="#C8C5B5"/><rect x="11" y="22" width="1" height="1" fill="#C8C5B5"/><rect x="13" y="22" width="1" height="1" fill="#C8C5B5"/><rect x="15" y="22" width="1" height="1" fill="#C8C5B5"/><rect x="17" y="22" width="1" height="1" fill="#C8C5B5"/><rect x="19" y="22" width="1" height="1" fill="#C8C5B5"/><rect x="21" y="22" width="1" height="1" fill="#C8C5B5"/><rect x="23" y="22" width="1" height="1" fill="#C8C5B5"/><path d="M7,6 L8,9 L7,12 L8,15 L9,18 L7,22" fill="none" stroke="#000" stroke-width="1.3"/><path d="M13,6 L14,9 L13,12 L14,15 L14,18 L13,21" fill="none" stroke="#000" stroke-width="1.3"/><path d="M17,9 L18,12 L19,15 L18,18 L17,21" fill="none" stroke="#000" stroke-width="1.3"/></svg>
<svg style="position:absolute;left:261px;top:86px" width="28" height="28" viewBox="0 0 28 28" shape-rendering="crispEdges" ><rect x="6" y="10" width="8" height="1" fill="#000"/><rect x="18" y="10" width="5" height="1" fill="#000"/><rect x="5" y="12" width="9" height="1" fill="#000"/><rect x="17" y="12" width="6" height="1" fill="#000"/><rect x="4" y="14" width="5" height="1" fill="#000"/><rect x="10" y="14" width="3" height="1" fill="#000"/><rect x="16" y="14" width="7" height="1" fill="#000"/><rect x="4" y="16" width="3" height="1" fill="#000"/><rect x="10" y="16" width="3" height="1" fill="#000"/><rect x="15" y="16" width="7" height="1" fill="#000"/><rect x="4" y="18" width="2" height="1" fill="#000"/><rect x="10" y="18" width="3" height="1" fill="#000"/><rect x="15" y="18" width="6" height="1" fill="#000"/><rect x="4" y="20" width="2" height="1" fill="#000"/><rect x="9" y="20" width="11" height="1" fill="#000"/><rect x="4" y="22" width="2" height="1" fill="#000"/><rect x="7" y="22" width="12" height="1" fill="#000"/><path d="M16.5,5 L15,8 L14.5,10.5 L16.5,12 M15,6 L17.5,10 L17.5,12 L15.5,14 L15.5,18 L14,19 L9,19 L8.5,16 L9.5,13 L12,12.5 L13.5,14 L13.5,17 L10,17 L9,20 L8,22 M5,19.5 L5,21 L4.5,22.5" fill="none" stroke="#000" stroke-width="1.2" shape-rendering="auto"/></svg>
<svg style="position:absolute;left:329px;top:86px" width="28" height="28" viewBox="0 0 28 28" shape-rendering="crispEdges" ><path d="M4.5,5 V22.5 H23" fill="none" stroke="#000"/><rect x="5" y="5" width="3" height="1" fill="#000"/><rect x="5" y="7" width="2" height="1" fill="#000"/><rect x="5" y="9" width="3" height="1" fill="#000"/><rect x="5" y="11" width="2" height="1" fill="#000"/><rect x="5" y="13" width="3" height="1" fill="#000"/><rect x="5" y="15" width="2" height="1" fill="#000"/><rect x="5" y="17" width="3" height="1" fill="#000"/><rect x="5" y="19" width="2" height="1" fill="#000"/><rect x="5" y="21" width="3" height="1" fill="#000"/><rect x="7" y="19" width="1" height="3" fill="#000"/><rect x="9" y="20" width="1" height="2" fill="#000"/><rect x="11" y="19" width="1" height="3" fill="#000"/><rect x="13" y="20" width="1" height="2" fill="#000"/><rect x="15" y="19" width="1" height="3" fill="#000"/><rect x="17" y="20" width="1" height="2" fill="#000"/><rect x="19" y="19" width="1" height="3" fill="#000"/><rect x="21" y="20" width="1" height="2" fill="#000"/><rect x="23" y="19" width="1" height="3" fill="#000"/></svg>
<svg style="position:absolute;left:359px;top:86px" width="28" height="28" viewBox="0 0 28 28" shape-rendering="crispEdges" ><path d="M13.5,4 V12" stroke="#000"/><path d="M5,12.5 H22" stroke="#000"/><path d="M13.5,7 L10,14 Q7,17 8,20 Q9,23 12,22" fill="none" stroke="#000"/><path d="M13.5,7 L17,14 Q20,17 19,20 Q18,23 15,22" fill="none" stroke="#000"/><rect x="12" y="9" width="3" height="3" fill="#000"/></svg>
<svg style="position:absolute;left:487px;top:86px" width="28" height="28" viewBox="0 0 28 28" shape-rendering="crispEdges" ><path d="M13.5,2 V25" stroke="#000"/><circle cx="13.5" cy="13.5" r="9.5" fill="#fff" stroke="#000" stroke-width="1.2"/><path d="M6.5,14 Q9,6 12,11 Q14,16 16,17 Q19,19 20.5,12" fill="none" stroke="#000" stroke-width="1.4"/></svg>
<svg style="position:absolute;left:300.8px;top:89.1px" width="22.899999999999977" height="17.5"><text x="2" y="13.5" font-family="Liberation Serif" font-weight="normal" font-style="normal" font-size="11.5" fill="#000" stroke="#000" stroke-width="0.2" textLength="18.899999999999977" lengthAdjust="spacingAndGlyphs">FFT</text></svg>
<svg style="position:absolute;left:390px;top:88.5px" width="25" height="19"><text x="2" y="15" font-family="Liberation Serif" font-weight="normal" font-style="normal" font-size="13" fill="#000" stroke="#000" stroke-width="0.2" textLength="21" lengthAdjust="spacingAndGlyphs">Trig</text></svg>
<svg style="position:absolute;left:422px;top:85.3px" width="21.80000000000001" height="16"><text x="2" y="12" font-family="Liberation Serif" font-weight="normal" font-style="normal" font-size="10" fill="#000" stroke="#000" stroke-width="0.2" textLength="17.80000000000001" lengthAdjust="spacingAndGlyphs">Run</text></svg>
<svg style="position:absolute;left:422px;top:95.7px" width="21.80000000000001" height="16"><text x="2" y="12" font-family="Liberation Serif" font-weight="normal" font-style="normal" font-size="10" fill="#000" stroke="#000" stroke-width="0.2" textLength="17.80000000000001" lengthAdjust="spacingAndGlyphs">Ctrl</text></svg>
<svg style="position:absolute;left:452.8px;top:88.9px" width="20.19999999999999" height="19"><text x="2" y="15" font-family="Liberation Serif" font-weight="normal" font-style="normal" font-size="13" fill="#000" stroke="#000" stroke-width="0.2" textLength="16.19999999999999" lengthAdjust="spacingAndGlyphs">I/O</text></svg>
<svg style="position:absolute;left:529.7px;top:88.8px" width="18.59999999999991" height="19"><text x="2" y="15" font-family="Liberation Serif" font-weight="normal" font-style="normal" font-size="13" fill="#000" stroke="#000" stroke-width="0.2" textLength="14.599999999999909" lengthAdjust="spacingAndGlyphs">Hz</text></svg>
<svg style="position:absolute;left:560.8px;top:89.5px" width="17.600000000000023" height="19"><text x="2" y="15" font-family="Liberation Serif" font-weight="normal" font-style="normal" font-size="13" fill="#000" stroke="#000" stroke-width="0.2" textLength="13.600000000000023" lengthAdjust="spacingAndGlyphs">dB</text></svg>
<svg style="position:absolute;left:586.2px;top:89px" width="23.899999999999977" height="19"><text x="2" y="15" font-family="Liberation Serif" font-weight="normal" font-style="normal" font-size="13" fill="#000" stroke="#000" stroke-width="0.2" textLength="19.899999999999977" lengthAdjust="spacingAndGlyphs">Pwr</text></svg>
<svg style="position:absolute;left:624px;top:89.4px" width="24.399999999999977" height="18"><text x="2" y="14" font-family="Liberation Serif" font-weight="normal" font-style="normal" font-size="12" fill="#000" stroke="#000" stroke-width="0.2" textLength="20.399999999999977" lengthAdjust="spacingAndGlyphs">THD</text></svg>
<svg style="position:absolute;left:654px;top:85px" width="23.899999999999977" height="18"><text x="2" y="14" font-family="Liberation Serif" font-weight="normal" font-style="normal" font-size="12" fill="#000" stroke="#000" stroke-width="0.2" textLength="19.899999999999977" lengthAdjust="spacingAndGlyphs">THD</text></svg>
<svg style="position:absolute;left:684px;top:85px" width="24" height="18"><text x="2" y="14" font-family="Liberation Serif" font-weight="normal" font-style="normal" font-size="12" fill="#000" stroke="#000" stroke-width="0.2" textLength="20" lengthAdjust="spacingAndGlyphs">THD</text></svg>
<svg style="position:absolute;left:685px;top:95.5px" width="22.5" height="17"><text x="2" y="13" font-family="Liberation Serif" font-weight="normal" font-style="normal" font-size="11" fill="#000" stroke="#000" stroke-width="0.2" textLength="18.5" lengthAdjust="spacingAndGlyphs">Freq</text></svg>
<svg style="position:absolute;left:722.7px;top:90.7px" width="25.0" height="18"><text x="2" y="14" font-family="Liberation Serif" font-weight="normal" font-style="normal" font-size="12" fill="#000" stroke="#000" stroke-width="0.2" textLength="21.0" lengthAdjust="spacingAndGlyphs">IMD</text></svg>
<svg style="position:absolute;left:751.6px;top:89.8px" width="25.799999999999955" height="18"><text x="2" y="14" font-family="Liberation Serif" font-weight="normal" font-style="normal" font-size="12" fill="#000" stroke="#000" stroke-width="0.2" textLength="21.799999999999955" lengthAdjust="spacingAndGlyphs">SNR</text></svg>
<svg style="position:absolute;left:783px;top:88.8px" width="23.600000000000023" height="19"><text x="2" y="15" font-family="Liberation Serif" font-weight="normal" font-style="normal" font-size="13" fill="#000" stroke="#000" stroke-width="0.2" textLength="19.600000000000023" lengthAdjust="spacingAndGlyphs">Leq</text></svg>
<svg style="position:absolute;left:820.4px;top:88.8px" width="24.899999999999977" height="19"><text x="2" y="15" font-family="Liberation Serif" font-weight="normal" font-style="normal" font-size="13" fill="#000" stroke="#000" stroke-width="0.2" textLength="20.899999999999977" lengthAdjust="spacingAndGlyphs">Mac</text></svg>
<svg style="position:absolute;left:850.8px;top:88.8px" width="24.300000000000068" height="19"><text x="2" y="15" font-family="Liberation Serif" font-weight="normal" font-style="normal" font-size="13" fill="#000" stroke="#000" stroke-width="0.2" textLength="20.300000000000068" lengthAdjust="spacingAndGlyphs">Log</text></svg>
<svg style="position:absolute;left:889.5px;top:88.6px" width="22.399999999999977" height="19"><text x="2" y="15" font-family="Liberation Serif" font-weight="normal" font-style="normal" font-size="13" fill="#000" stroke="#000" stroke-width="0.2" textLength="18.399999999999977" lengthAdjust="spacingAndGlyphs">Dly</text></svg>
<svg style="position:absolute;left:917.8px;top:88.6px" width="25.300000000000068" height="19"><text x="2" y="15" font-family="Liberation Serif" font-weight="normal" font-style="normal" font-size="13" fill="#000" stroke="#000" stroke-width="0.2" textLength="21.300000000000068" lengthAdjust="spacingAndGlyphs">Rvb</text></svg>
<svg style="position:absolute;left:948.4px;top:88.6px" width="22.600000000000023" height="19"><text x="2" y="15" font-family="Liberation Serif" font-weight="normal" font-style="normal" font-size="13" fill="#000" stroke="#000" stroke-width="0.2" textLength="18.600000000000023" lengthAdjust="spacingAndGlyphs">Scp</text></svg>
<svg style="position:absolute;left:657px;top:97.5px" width="18" height="15"><text x="2" y="11" font-family="Liberation Sans" font-weight="normal" font-style="normal" font-size="9" fill="#000" textLength="14" lengthAdjust="spacingAndGlyphs">+N</text></svg>
<div class="bn" style="left:6px;top:119px;width:24px;height:24px"></div>
<div class="bn" style="left:36px;top:119px;width:24px;height:24px"></div>
<div class="bn" style="left:66px;top:119px;width:24px;height:24px"></div>
<div class="bn" style="left:96px;top:119px;width:24px;height:24px"></div>
<div class="bn" style="left:133px;top:119px;width:24px;height:24px"></div>
<div class="bp" style="left:163px;top:119px;width:24px;height:24px"></div>
<div class="bn" style="left:193px;top:119px;width:24px;height:24px"></div>
<div class="bn" style="left:230px;top:119px;width:24px;height:24px"></div>
<div class="bn" style="left:260px;top:119px;width:24px;height:24px"></div>
<div class="bn" style="left:297px;top:119px;width:24px;height:24px"></div>
<svg style="position:absolute;left:6px;top:119px" width="28" height="28" viewBox="0 0 28 28"  shape-rendering="auto"><rect x="6" y="5" width="8" height="10" fill="#000"/><rect x="5" y="6" width="10" height="8" fill="#000"/><rect x="4" y="7" width="12" height="6" fill="#000"/><rect x="7" y="4" width="6" height="12" fill="#000"/><rect x="7" y="5" width="6" height="10" fill="#fff"/><rect x="5" y="7" width="10" height="6" fill="#fff"/><rect x="6" y="6" width="8" height="8" fill="#fff"/><rect x="7" y="6" width="6" height="8" fill="#000"/><rect x="6" y="7" width="8" height="6" fill="#000"/><rect x="8" y="7" width="4" height="6" fill="#ECE9D8"/><rect x="7" y="8" width="6" height="4" fill="#ECE9D8"/><path d="M14.5,14.5 L21,21" stroke="#000" stroke-width="2" shape-rendering="auto"/></svg>
<svg style="position:absolute;left:36px;top:119px" width="28" height="28" viewBox="0 0 28 28"  shape-rendering="auto"><rect x="5" y="5" width="7" height="7" fill="#fff"/><rect x="6" y="4" width="5" height="9" fill="#fff"/><rect x="4" y="6" width="9" height="5" fill="#fff"/><rect x="6" y="4" width="1" height="1" fill="#000"/><rect x="7" y="4" width="1" height="1" fill="#000"/><rect x="8" y="4" width="1" height="1" fill="#000"/><rect x="9" y="4" width="1" height="1" fill="#000"/><rect x="10" y="4" width="1" height="1" fill="#000"/><rect x="5" y="5" width="1" height="1" fill="#000"/><rect x="11" y="5" width="1" height="1" fill="#000"/><rect x="4" y="6" width="1" height="1" fill="#000"/><rect x="12" y="6" width="1" height="1" fill="#000"/><rect x="4" y="7" width="1" height="1" fill="#000"/><rect x="12" y="7" width="1" height="1" fill="#000"/><rect x="4" y="8" width="1" height="1" fill="#000"/><rect x="12" y="8" width="1" height="1" fill="#000"/><rect x="4" y="9" width="1" height="1" fill="#000"/><rect x="12" y="9" width="1" height="1" fill="#000"/><rect x="4" y="10" width="1" height="1" fill="#000"/><rect x="12" y="10" width="1" height="1" fill="#000"/><rect x="5" y="11" width="1" height="1" fill="#000"/><rect x="11" y="11" width="1" height="1" fill="#000"/><rect x="6" y="12" width="1" height="1" fill="#000"/><rect x="7" y="12" width="1" height="1" fill="#000"/><rect x="8" y="12" width="1" height="1" fill="#000"/><rect x="9" y="12" width="1" height="1" fill="#000"/><rect x="10" y="12" width="1" height="1" fill="#000"/><rect x="7" y="13" width="3" height="8" fill="#000"/><rect x="8" y="21" width="1" height="2" fill="#000"/><rect x="15" y="6" width="1" height="1" fill="#000"/><rect x="16" y="6" width="1" height="1" fill="#000"/><rect x="15" y="7" width="1" height="1" fill="#000"/><rect x="16" y="7" width="1" height="1" fill="#000"/><rect x="15" y="8" width="1" height="1" fill="#000"/><rect x="16" y="8" width="1" height="1" fill="#000"/><rect x="15" y="9" width="1" height="1" fill="#000"/><rect x="16" y="9" width="1" height="1" fill="#000"/><rect x="15" y="10" width="1" height="1" fill="#000"/><rect x="16" y="10" width="1" height="1" fill="#000"/><rect x="18" y="6" width="1" height="1" fill="#000"/><rect x="21" y="6" width="1" height="1" fill="#000"/><rect x="18" y="7" width="1" height="1" fill="#000"/><rect x="19" y="7" width="1" height="1" fill="#000"/><rect x="21" y="7" width="1" height="1" fill="#000"/><rect x="18" y="8" width="1" height="1" fill="#000"/><rect x="20" y="8" width="1" height="1" fill="#000"/><rect x="21" y="8" width="1" height="1" fill="#000"/><rect x="18" y="9" width="1" height="1" fill="#000"/><rect x="21" y="9" width="1" height="1" fill="#000"/><rect x="18" y="10" width="1" height="1" fill="#000"/><rect x="21" y="10" width="1" height="1" fill="#000"/><rect x="13" y="14" width="1" height="1" fill="#000"/><rect x="14" y="14" width="1" height="1" fill="#000"/><rect x="15" y="14" width="1" height="1" fill="#000"/><rect x="12" y="15" width="1" height="1" fill="#000"/><rect x="16" y="15" width="1" height="1" fill="#000"/><rect x="16" y="16" width="1" height="1" fill="#000"/><rect x="15" y="17" width="1" height="1" fill="#000"/><rect x="14" y="18" width="1" height="1" fill="#000"/><rect x="13" y="19" width="1" height="1" fill="#000"/><rect x="12" y="20" width="1" height="1" fill="#000"/><rect x="12" y="21" width="1" height="1" fill="#000"/><rect x="12" y="22" width="1" height="1" fill="#000"/><rect x="13" y="22" width="1" height="1" fill="#000"/><rect x="14" y="22" width="1" height="1" fill="#000"/><rect x="15" y="22" width="1" height="1" fill="#000"/><rect x="16" y="22" width="1" height="1" fill="#000"/><rect x="18" y="14" width="1" height="1" fill="#000"/><rect x="22" y="14" width="1" height="1" fill="#000"/><rect x="18" y="15" width="1" height="1" fill="#000"/><rect x="22" y="15" width="1" height="1" fill="#000"/><rect x="19" y="16" width="1" height="1" fill="#000"/><rect x="21" y="16" width="1" height="1" fill="#000"/><rect x="19" y="17" width="1" height="1" fill="#000"/><rect x="21" y="17" width="1" height="1" fill="#000"/><rect x="20" y="18" width="1" height="1" fill="#000"/><rect x="19" y="19" width="1" height="1" fill="#000"/><rect x="21" y="19" width="1" height="1" fill="#000"/><rect x="19" y="20" width="1" height="1" fill="#000"/><rect x="21" y="20" width="1" height="1" fill="#000"/><rect x="18" y="21" width="1" height="1" fill="#000"/><rect x="22" y="21" width="1" height="1" fill="#000"/><rect x="18" y="22" width="1" height="1" fill="#000"/><rect x="22" y="22" width="1" height="1" fill="#000"/></svg>
<svg style="position:absolute;left:66px;top:119px" width="28" height="28" viewBox="0 0 28 28"  shape-rendering="auto"><rect x="5" y="5" width="7" height="7" fill="#fff"/><rect x="6" y="4" width="5" height="9" fill="#fff"/><rect x="4" y="6" width="9" height="5" fill="#fff"/><rect x="6" y="4" width="1" height="1" fill="#000"/><rect x="7" y="4" width="1" height="1" fill="#000"/><rect x="8" y="4" width="1" height="1" fill="#000"/><rect x="9" y="4" width="1" height="1" fill="#000"/><rect x="10" y="4" width="1" height="1" fill="#000"/><rect x="5" y="5" width="1" height="1" fill="#000"/><rect x="11" y="5" width="1" height="1" fill="#000"/><rect x="4" y="6" width="1" height="1" fill="#000"/><rect x="12" y="6" width="1" height="1" fill="#000"/><rect x="4" y="7" width="1" height="1" fill="#000"/><rect x="12" y="7" width="1" height="1" fill="#000"/><rect x="4" y="8" width="1" height="1" fill="#000"/><rect x="12" y="8" width="1" height="1" fill="#000"/><rect x="4" y="9" width="1" height="1" fill="#000"/><rect x="12" y="9" width="1" height="1" fill="#000"/><rect x="4" y="10" width="1" height="1" fill="#000"/><rect x="12" y="10" width="1" height="1" fill="#000"/><rect x="5" y="11" width="1" height="1" fill="#000"/><rect x="11" y="11" width="1" height="1" fill="#000"/><rect x="6" y="12" width="1" height="1" fill="#000"/><rect x="7" y="12" width="1" height="1" fill="#000"/><rect x="8" y="12" width="1" height="1" fill="#000"/><rect x="9" y="12" width="1" height="1" fill="#000"/><rect x="10" y="12" width="1" height="1" fill="#000"/><rect x="7" y="13" width="3" height="8" fill="#000"/><rect x="8" y="21" width="1" height="2" fill="#000"/><rect x="12" y="6" width="1" height="1" fill="#000"/><rect x="13" y="6" width="1" height="1" fill="#000"/><rect x="11" y="7" width="1" height="1" fill="#000"/><rect x="14" y="7" width="1" height="1" fill="#000"/><rect x="11" y="8" width="1" height="1" fill="#000"/><rect x="14" y="8" width="1" height="1" fill="#000"/><rect x="11" y="9" width="1" height="1" fill="#000"/><rect x="14" y="9" width="1" height="1" fill="#000"/><rect x="12" y="10" width="1" height="1" fill="#000"/><rect x="13" y="10" width="1" height="1" fill="#000"/><rect x="16" y="6" width="1" height="1" fill="#000"/><rect x="19" y="6" width="1" height="1" fill="#000"/><rect x="16" y="7" width="1" height="1" fill="#000"/><rect x="19" y="7" width="1" height="1" fill="#000"/><rect x="16" y="8" width="1" height="1" fill="#000"/><rect x="19" y="8" width="1" height="1" fill="#000"/><rect x="16" y="9" width="1" height="1" fill="#000"/><rect x="19" y="9" width="1" height="1" fill="#000"/><rect x="17" y="10" width="1" height="1" fill="#000"/><rect x="18" y="10" width="1" height="1" fill="#000"/><rect x="21" y="6" width="1" height="1" fill="#000"/><rect x="22" y="6" width="1" height="1" fill="#000"/><rect x="23" y="6" width="1" height="1" fill="#000"/><rect x="22" y="7" width="1" height="1" fill="#000"/><rect x="22" y="8" width="1" height="1" fill="#000"/><rect x="22" y="9" width="1" height="1" fill="#000"/><rect x="22" y="10" width="1" height="1" fill="#000"/><rect x="13" y="14" width="1" height="1" fill="#000"/><rect x="14" y="14" width="1" height="1" fill="#000"/><rect x="15" y="14" width="1" height="1" fill="#000"/><rect x="12" y="15" width="1" height="1" fill="#000"/><rect x="16" y="15" width="1" height="1" fill="#000"/><rect x="16" y="16" width="1" height="1" fill="#000"/><rect x="15" y="17" width="1" height="1" fill="#000"/><rect x="14" y="18" width="1" height="1" fill="#000"/><rect x="13" y="19" width="1" height="1" fill="#000"/><rect x="12" y="20" width="1" height="1" fill="#000"/><rect x="12" y="21" width="1" height="1" fill="#000"/><rect x="12" y="22" width="1" height="1" fill="#000"/><rect x="13" y="22" width="1" height="1" fill="#000"/><rect x="14" y="22" width="1" height="1" fill="#000"/><rect x="15" y="22" width="1" height="1" fill="#000"/><rect x="16" y="22" width="1" height="1" fill="#000"/><rect x="18" y="14" width="1" height="1" fill="#000"/><rect x="22" y="14" width="1" height="1" fill="#000"/><rect x="18" y="15" width="1" height="1" fill="#000"/><rect x="22" y="15" width="1" height="1" fill="#000"/><rect x="19" y="16" width="1" height="1" fill="#000"/><rect x="21" y="16" width="1" height="1" fill="#000"/><rect x="19" y="17" width="1" height="1" fill="#000"/><rect x="21" y="17" width="1" height="1" fill="#000"/><rect x="20" y="18" width="1" height="1" fill="#000"/><rect x="19" y="19" width="1" height="1" fill="#000"/><rect x="21" y="19" width="1" height="1" fill="#000"/><rect x="19" y="20" width="1" height="1" fill="#000"/><rect x="21" y="20" width="1" height="1" fill="#000"/><rect x="18" y="21" width="1" height="1" fill="#000"/><rect x="22" y="21" width="1" height="1" fill="#000"/><rect x="18" y="22" width="1" height="1" fill="#000"/><rect x="22" y="22" width="1" height="1" fill="#000"/></svg>
<svg style="position:absolute;left:96px;top:119px" width="28" height="28" viewBox="0 0 28 28"  shape-rendering="auto"><rect x="5" y="5" width="7" height="7" fill="#fff"/><rect x="6" y="4" width="5" height="9" fill="#fff"/><rect x="4" y="6" width="9" height="5" fill="#fff"/><rect x="6" y="4" width="1" height="1" fill="#000"/><rect x="7" y="4" width="1" height="1" fill="#000"/><rect x="8" y="4" width="1" height="1" fill="#000"/><rect x="9" y="4" width="1" height="1" fill="#000"/><rect x="10" y="4" width="1" height="1" fill="#000"/><rect x="5" y="5" width="1" height="1" fill="#000"/><rect x="11" y="5" width="1" height="1" fill="#000"/><rect x="4" y="6" width="1" height="1" fill="#000"/><rect x="12" y="6" width="1" height="1" fill="#000"/><rect x="4" y="7" width="1" height="1" fill="#000"/><rect x="12" y="7" width="1" height="1" fill="#000"/><rect x="4" y="8" width="1" height="1" fill="#000"/><rect x="12" y="8" width="1" height="1" fill="#000"/><rect x="4" y="9" width="1" height="1" fill="#000"/><rect x="12" y="9" width="1" height="1" fill="#000"/><rect x="4" y="10" width="1" height="1" fill="#000"/><rect x="12" y="10" width="1" height="1" fill="#000"/><rect x="5" y="11" width="1" height="1" fill="#000"/><rect x="11" y="11" width="1" height="1" fill="#000"/><rect x="6" y="12" width="1" height="1" fill="#000"/><rect x="7" y="12" width="1" height="1" fill="#000"/><rect x="8" y="12" width="1" height="1" fill="#000"/><rect x="9" y="12" width="1" height="1" fill="#000"/><rect x="10" y="12" width="1" height="1" fill="#000"/><path d="M7.5,13 Q6,17 8.5,22" stroke="#000" stroke-width="2.6" fill="none" shape-rendering="auto"/><rect x="12" y="6" width="1" height="1" fill="#000"/><rect x="13" y="6" width="1" height="1" fill="#000"/><rect x="11" y="7" width="1" height="1" fill="#000"/><rect x="14" y="7" width="1" height="1" fill="#000"/><rect x="11" y="8" width="1" height="1" fill="#000"/><rect x="14" y="8" width="1" height="1" fill="#000"/><rect x="11" y="9" width="1" height="1" fill="#000"/><rect x="14" y="9" width="1" height="1" fill="#000"/><rect x="12" y="10" width="1" height="1" fill="#000"/><rect x="13" y="10" width="1" height="1" fill="#000"/><rect x="16" y="6" width="1" height="1" fill="#000"/><rect x="19" y="6" width="1" height="1" fill="#000"/><rect x="16" y="7" width="1" height="1" fill="#000"/><rect x="19" y="7" width="1" height="1" fill="#000"/><rect x="16" y="8" width="1" height="1" fill="#000"/><rect x="19" y="8" width="1" height="1" fill="#000"/><rect x="16" y="9" width="1" height="1" fill="#000"/><rect x="19" y="9" width="1" height="1" fill="#000"/><rect x="17" y="10" width="1" height="1" fill="#000"/><rect x="18" y="10" width="1" height="1" fill="#000"/><rect x="21" y="6" width="1" height="1" fill="#000"/><rect x="22" y="6" width="1" height="1" fill="#000"/><rect x="23" y="6" width="1" height="1" fill="#000"/><rect x="22" y="7" width="1" height="1" fill="#000"/><rect x="22" y="8" width="1" height="1" fill="#000"/><rect x="22" y="9" width="1" height="1" fill="#000"/><rect x="22" y="10" width="1" height="1" fill="#000"/><rect x="9" y="15" width="1" height="1" fill="#000"/><rect x="10" y="15" width="1" height="1" fill="#000"/><rect x="11" y="15" width="1" height="1" fill="#000"/><rect x="9" y="16" width="1" height="1" fill="#000"/><rect x="9" y="17" width="1" height="1" fill="#000"/><rect x="10" y="17" width="1" height="1" fill="#000"/><rect x="9" y="18" width="1" height="1" fill="#000"/><rect x="9" y="19" width="1" height="1" fill="#000"/><rect x="13" y="15" width="1" height="1" fill="#000"/><rect x="16" y="15" width="1" height="1" fill="#000"/><rect x="13" y="16" width="1" height="1" fill="#000"/><rect x="16" y="16" width="1" height="1" fill="#000"/><rect x="13" y="17" width="1" height="1" fill="#000"/><rect x="16" y="17" width="1" height="1" fill="#000"/><rect x="13" y="18" width="1" height="1" fill="#000"/><rect x="16" y="18" width="1" height="1" fill="#000"/><rect x="14" y="19" width="1" height="1" fill="#000"/><rect x="15" y="19" width="1" height="1" fill="#000"/><rect x="18" y="15" width="1" height="1" fill="#000"/><rect x="18" y="16" width="1" height="1" fill="#000"/><rect x="18" y="17" width="1" height="1" fill="#000"/><rect x="18" y="18" width="1" height="1" fill="#000"/><rect x="18" y="19" width="1" height="1" fill="#000"/><rect x="19" y="19" width="1" height="1" fill="#000"/><rect x="20" y="19" width="1" height="1" fill="#000"/><rect x="22" y="15" width="1" height="1" fill="#000"/><rect x="22" y="16" width="1" height="1" fill="#000"/><rect x="22" y="17" width="1" height="1" fill="#000"/><rect x="22" y="18" width="1" height="1" fill="#000"/><rect x="22" y="19" width="1" height="1" fill="#000"/><rect x="23" y="19" width="1" height="1" fill="#000"/><rect x="24" y="19" width="1" height="1" fill="#000"/></svg>
<svg style="position:absolute;left:133px;top:119px" width="28" height="28" viewBox="0 0 28 28"  shape-rendering="auto"><polyline points="4.5,21 4.5,18.5 7,18.5 8.5,15.5 9.5,13.5 10.5,11.5 10.5,7.5 11,12 12,14.5 13.5,16 15,18 17,18.5 18.5,19 20,20.5 22.5,20.5" fill="none" stroke="#000" stroke-width="1.2" shape-rendering="auto"/></svg>
<svg style="position:absolute;left:164px;top:120px" width="28" height="28" viewBox="0 0 28 28" shape-rendering="crispEdges" ><path d="M4.5,23 V15.5 H7.5 V11.5 H10.5 V8.5 H13.5 V15.5 H16.5 V12.5 H19.5 V14.5 H22.5 V23" fill="none" stroke="#000"/></svg>
<svg style="position:absolute;left:193px;top:119px" width="28" height="28" viewBox="0 0 28 28"  shape-rendering="auto"><path d="M4.5,23 V15.5 H7.5 V10.5 H10.5 V7.5 H13.5 V7.5 H15.5 V8.5 H17.5 V11.5 H19.5 V13.5 H22.5 V23" fill="none" stroke="#000"/><path d="M7.5,15 V23 M10.5,10 V23 M13.5,7 V23 M15.5,8 V23 M17.5,11 V23 M19.5,13 V23" stroke="#000"/></svg>
<svg style="position:absolute;left:230px;top:119px" width="28" height="28" viewBox="0 0 28 28" shape-rendering="crispEdges" ><rect x="4.5" y="4.5" width="18" height="19" fill="#fff" stroke="#000"/><rect x="5" y="5" width="17" height="3" fill="#ECE9D8"/><path d="M5,8.5 H22" stroke="#000"/><rect x="6" y="5" width="1" height="1" fill="#000"/><rect x="8" y="5" width="1" height="1" fill="#000"/><rect x="10" y="5" width="1" height="1" fill="#000"/><rect x="12" y="5" width="1" height="1" fill="#000"/><rect x="14" y="5" width="1" height="1" fill="#000"/><rect x="16" y="5" width="1" height="1" fill="#000"/><rect x="18" y="5" width="1" height="1" fill="#000"/><rect x="20" y="5" width="1" height="1" fill="#000"/><rect x="10.5" y="10.5" width="10" height="3" fill="#fff" stroke="#000"/><rect x="13.5" y="15.5" width="7" height="2" fill="#fff" stroke="#000"/><rect x="13.5" y="19.5" width="7" height="2" fill="#fff" stroke="#000"/><path d="M7,16.5 H10 M7,20.5 H10" stroke="#000"/></svg>
<svg style="position:absolute;left:297px;top:119px" width="28" height="28" viewBox="0 0 28 28"  shape-rendering="auto"><path d="M4.5,2 V23.5 H23" fill="none" stroke="#000"/><path d="M10,4.5 H18 M10,20.5 H18 M14.5,5 V20" stroke="#000"/><path d="M12,8 L14.5,5 L17,8 Z M12,18 L14.5,20 L17,18 Z" fill="#000"/></svg>
<svg style="position:absolute;left:260.8px;top:122px" width="25.5" height="19"><text x="2" y="15" font-family="Liberation Serif" font-weight="normal" font-style="normal" font-size="13" fill="#000" stroke="#000" stroke-width="0.2" textLength="21.5" lengthAdjust="spacingAndGlyphs">Mrk</text></svg>
<svg style="position:absolute;left:332.1px;top:124.5px" width="51.299999999999955" height="18"><text x="2" y="14" font-family="Liberation Sans" font-weight="normal" font-style="normal" font-size="12" fill="#000" textLength="47.299999999999955" lengthAdjust="spacingAndGlyphs">Plot Top:</text></svg>
<div style="left:385px;top:123px;width:54px;height:18px;background:#fff;border:1px solid #000;"></div>
<svg style="position:absolute;left:386px;top:122.80000000000001px" width="33.19999999999999" height="18"><text x="2" y="14" font-family="Liberation Sans" font-weight="normal" font-style="normal" font-size="12" fill="#000" textLength="29.19999999999999" lengthAdjust="spacingAndGlyphs">10.00</text></svg>
<svg style="position:absolute;left:462.5px;top:124.5px" width="66.89999999999998" height="18"><text x="2" y="14" font-family="Liberation Sans" font-weight="normal" font-style="normal" font-size="12" fill="#000" textLength="62.89999999999998" lengthAdjust="spacingAndGlyphs">Plot Range:</text></svg>
<div style="left:531px;top:123px;width:54px;height:18px;background:#fff;border:1px solid #000;"></div>
<svg style="position:absolute;left:531.8px;top:122.80000000000001px" width="33.80000000000007" height="18"><text x="2" y="14" font-family="Liberation Sans" font-weight="normal" font-style="normal" font-size="12" fill="#000" textLength="29.800000000000068" lengthAdjust="spacingAndGlyphs">190.0</text></svg>
<div style="left:443px;top:123px;width:12px;height:10px;background:#ECE9D8;box-shadow:inset 1px 1px 0 #fff, inset -1px -1px 0 #716F64, inset -2px -2px 0 #ACA899;"></div>
<div style="left:443px;top:133px;width:12px;height:10px;background:#ECE9D8;box-shadow:inset 1px 1px 0 #fff, inset -1px -1px 0 #716F64, inset -2px -2px 0 #ACA899;"></div>
<svg style="position:absolute;left:443px;top:123px" width="12" height="20" viewBox="0 0 12 20" shape-rendering="crispEdges" ><rect x="5" y="4" width="1" height="1"/><rect x="4" y="5" width="3" height="1"/><rect x="4" y="14" width="3" height="1"/><rect x="5" y="15" width="1" height="1"/></svg>
<div style="left:589px;top:123px;width:12px;height:10px;background:#ECE9D8;box-shadow:inset 1px 1px 0 #fff, inset -1px -1px 0 #716F64, inset -2px -2px 0 #ACA899;"></div>
<div style="left:589px;top:133px;width:12px;height:10px;background:#ECE9D8;box-shadow:inset 1px 1px 0 #fff, inset -1px -1px 0 #716F64, inset -2px -2px 0 #ACA899;"></div>
<svg style="position:absolute;left:589px;top:123px" width="12" height="20" viewBox="0 0 12 20" shape-rendering="crispEdges" ><rect x="5" y="4" width="1" height="1"/><rect x="4" y="5" width="3" height="1"/><rect x="4" y="14" width="3" height="1"/><rect x="5" y="15" width="1" height="1"/></svg>
<svg style="position:absolute;left:612px;top:124.5px" width="63.39999999999998" height="18"><text x="2" y="14" font-family="Liberation Sans" font-weight="normal" font-style="normal" font-size="12" fill="#000" textLength="59.39999999999998" lengthAdjust="spacingAndGlyphs">Peak Hold:</text></svg>
<div style="left:677px;top:122px;width:72px;height:23px;background:#fff;box-shadow:inset 1px 1px 0 #ACA899, inset 2px 2px 0 #716F64, inset -1px -1px 0 #fff, inset -2px -2px 0 #ECE9D8;"></div>
<div style="left:730px;top:124px;width:17px;height:19px;background:#ECE9D8;box-shadow:inset 1px 1px 0 #fff, inset -1px -1px 0 #716F64, inset -2px -2px 0 #ACA899;"></div>
<svg style="position:absolute;left:735px;top:131px" width="7" height="4" viewBox="0 0 7 4" shape-rendering="crispEdges" ><rect x="0" y="0" width="7" height="1"/><rect x="1" y="1" width="5" height="1"/><rect x="2" y="2" width="3" height="1"/><rect x="3" y="3" width="1" height="1"/></svg>
<svg style="position:absolute;left:679px;top:124.30000000000001px" width="20" height="18"><text x="2" y="14" font-family="Liberation Sans" font-weight="normal" font-style="normal" font-size="12" fill="#000" textLength="16" lengthAdjust="spacingAndGlyphs">Off</text></svg>
<div style="left:1021px;top:117px;width:1px;height:592px;background:#FFFDF0;"></div>
<div style="left:1023px;top:117px;width:1px;height:592px;background:#F8F6EC;"></div>
<div style="left:4px;top:148px;width:1017px;height:1px;background:#000;"></div>
<div style="left:8px;top:152px;width:8px;height:8px;border:1px solid #000;box-shadow:inset 1px 1px 0 #fff,inset -1px -1px 0 #fff;background:#ECE9D8;"></div>
<div style="left:11px;top:157px;width:4px;height:1px;background:#000;"></div>
<div style="left:291px;width:400px;text-align:center;top:151.64px;font-size:12px;line-height:12px;font-family:'Liberation Sans', sans-serif;white-space:pre;">Left</div>
<div style="left:64px;top:166px;width:853px;height:2px;background:#ACA899;"></div>
<div style="left:64px;top:166px;width:2px;height:514px;background:#ACA899;"></div>
<div style="left:916px;top:168px;width:2px;height:512px;background:#fff;"></div>
<div style="left:66px;top:168px;width:850px;height:498px;background:#FFFFE1;"></div>
<svg style="position:absolute;left:66px;top:168px" width="850" height="498" viewBox="0 0 850 498" shape-rendering="crispEdges" ><rect x="0" y="26" width="850" height="1" fill="#C0C0C0"/><rect x="0" y="52" width="850" height="1" fill="#C0C0C0"/><rect x="0" y="78" width="850" height="1" fill="#C0C0C0"/><rect x="0" y="104" width="850" height="1" fill="#C0C0C0"/><rect x="0" y="131" width="850" height="1" fill="#C0C0C0"/><rect x="0" y="157" width="850" height="1" fill="#C0C0C0"/><rect x="0" y="183" width="850" height="1" fill="#C0C0C0"/><rect x="0" y="209" width="850" height="1" fill="#C0C0C0"/><rect x="0" y="235" width="850" height="1" fill="#C0C0C0"/><rect x="0" y="262" width="850" height="1" fill="#C0C0C0"/><rect x="0" y="288" width="850" height="1" fill="#C0C0C0"/><rect x="0" y="314" width="850" height="1" fill="#C0C0C0"/><rect x="0" y="340" width="850" height="1" fill="#C0C0C0"/><rect x="0" y="366" width="850" height="1" fill="#C0C0C0"/><rect x="0" y="393" width="850" height="1" fill="#C0C0C0"/><rect x="0" y="419" width="850" height="1" fill="#C0C0C0"/><rect x="0" y="445" width="850" height="1" fill="#C0C0C0"/><rect x="0" y="471" width="850" height="1" fill="#C0C0C0"/><rect x="30" y="0" width="1" height="498" fill="#C0C0C0"/><rect x="64" y="0" width="1" height="498" fill="#C0C0C0"/><rect x="94" y="0" width="1" height="498" fill="#C0C0C0"/><rect x="120" y="0" width="1" height="498" fill="#C0C0C0"/><rect x="297" y="0" width="1" height="498" fill="#C0C0C0"/><rect x="400" y="0" width="1" height="498" fill="#C0C0C0"/><rect x="473" y="0" width="1" height="498" fill="#C0C0C0"/><rect x="530" y="0" width="1" height="498" fill="#C0C0C0"/><rect x="576" y="0" width="1" height="498" fill="#C0C0C0"/><rect x="615" y="0" width="1" height="498" fill="#C0C0C0"/><rect x="649" y="0" width="1" height="498" fill="#C0C0C0"/><rect x="679" y="0" width="1" height="498" fill="#C0C0C0"/><rect x="706" y="0" width="1" height="498" fill="#C0C0C0"/></svg>
<div style="left:-340px;width:400px;text-align:right;top:162.34px;font-size:12px;line-height:12px;font-family:'Liberation Sans', sans-serif;white-space:pre;">10.0</div>
<div style="left:64px;top:168px;width:3px;height:1px;background:#000;"></div>
<div style="left:-340px;width:400px;text-align:right;top:188.54px;font-size:12px;line-height:12px;font-family:'Liberation Sans', sans-serif;white-space:pre;">0.0</div>
<div style="left:64px;top:194px;width:3px;height:1px;background:#000;"></div>
<div style="left:-340px;width:400px;text-align:right;top:214.74px;font-size:12px;line-height:12px;font-family:'Liberation Sans', sans-serif;white-space:pre;">-10.0</div>
<div style="left:64px;top:220px;width:3px;height:1px;background:#000;"></div>
<div style="left:-340px;width:400px;text-align:right;top:240.94px;font-size:12px;line-height:12px;font-family:'Liberation Sans', sans-serif;white-space:pre;">-20.0</div>
<div style="left:64px;top:246px;width:3px;height:1px;background:#000;"></div>
<div style="left:-340px;width:400px;text-align:right;top:267.14px;font-size:12px;line-height:12px;font-family:'Liberation Sans', sans-serif;white-space:pre;">-30.0</div>
<div style="left:64px;top:272px;width:3px;height:1px;background:#000;"></div>
<div style="left:-340px;width:400px;text-align:right;top:293.34px;font-size:12px;line-height:12px;font-family:'Liberation Sans', sans-serif;white-space:pre;">-40.0</div>
<div style="left:64px;top:299px;width:3px;height:1px;background:#000;"></div>
<div style="left:-340px;width:400px;text-align:right;top:319.54px;font-size:12px;line-height:12px;font-family:'Liberation Sans', sans-serif;white-space:pre;">-50.0</div>
<div style="left:64px;top:325px;width:3px;height:1px;background:#000;"></div>
<div style="left:-340px;width:400px;text-align:right;top:345.74px;font-size:12px;line-height:12px;font-family:'Liberation Sans', sans-serif;white-space:pre;">-60.0</div>
<div style="left:64px;top:351px;width:3px;height:1px;background:#000;"></div>
<div style="left:-340px;width:400px;text-align:right;top:371.94px;font-size:12px;line-height:12px;font-family:'Liberation Sans', sans-serif;white-space:pre;">-70.0</div>
<div style="left:64px;top:377px;width:3px;height:1px;background:#000;"></div>
<div style="left:-340px;width:400px;text-align:right;top:398.14px;font-size:12px;line-height:12px;font-family:'Liberation Sans', sans-serif;white-space:pre;">-80.0</div>
<div style="left:64px;top:403px;width:3px;height:1px;background:#000;"></div>
<div style="left:-340px;width:400px;text-align:right;top:424.34px;font-size:12px;line-height:12px;font-family:'Liberation Sans', sans-serif;white-space:pre;">-90.0</div>
<div style="left:64px;top:430px;width:3px;height:1px;background:#000;"></div>
<div style="left:-340px;width:400px;text-align:right;top:450.54px;font-size:12px;line-height:12px;font-family:'Liberation Sans', sans-serif;white-space:pre;">-100.0</div>
<div style="left:64px;top:456px;width:3px;height:1px;background:#000;"></div>
<div style="left:-340px;width:400px;text-align:right;top:476.74px;font-size:12px;line-height:12px;font-family:'Liberation Sans', sans-serif;white-space:pre;">-110.0</div>
<div style="left:64px;top:482px;width:3px;height:1px;background:#000;"></div>
<div style="left:-340px;width:400px;text-align:right;top:502.94px;font-size:12px;line-height:12px;font-family:'Liberation Sans', sans-serif;white-space:pre;">-120.0</div>
<div style="left:64px;top:508px;width:3px;height:1px;background:#000;"></div>
<div style="left:-340px;width:400px;text-align:right;top:529.14px;font-size:12px;line-height:12px;font-family:'Liberation Sans', sans-serif;white-space:pre;">-130.0</div>
<div style="left:64px;top:534px;width:3px;height:1px;background:#000;"></div>
<div style="left:-340px;width:400px;text-align:right;top:555.34px;font-size:12px;line-height:12px;font-family:'Liberation Sans', sans-serif;white-space:pre;">-140.0</div>
<div style="left:64px;top:561px;width:3px;height:1px;background:#000;"></div>
<div style="left:-340px;width:400px;text-align:right;top:581.54px;font-size:12px;line-height:12px;font-family:'Liberation Sans', sans-serif;white-space:pre;">-150.0</div>
<div style="left:64px;top:587px;width:3px;height:1px;background:#000;"></div>
<div style="left:-340px;width:400px;text-align:right;top:607.74px;font-size:12px;line-height:12px;font-family:'Liberation Sans', sans-serif;white-space:pre;">-160.0</div>
<div style="left:64px;top:613px;width:3px;height:1px;background:#000;"></div>
<div style="left:-340px;width:400px;text-align:right;top:633.94px;font-size:12px;line-height:12px;font-family:'Liberation Sans', sans-serif;white-space:pre;">-170.0</div>
<div style="left:64px;top:639px;width:3px;height:1px;background:#000;"></div>
<div style="left:-340px;width:400px;text-align:right;top:660.14px;font-size:12px;line-height:12px;font-family:'Liberation Sans', sans-serif;white-space:pre;">-180.0</div>
<div style="left:64px;top:665px;width:3px;height:1px;background:#000;"></div>
<div style="left:96px;top:678px;width:1px;height:3px;background:#000;"></div>
<div style="left:-103.5px;width:400px;text-align:center;top:682.54px;font-size:12px;line-height:12px;font-family:'Liberation Sans', sans-serif;white-space:pre;">700</div>
<div style="left:130px;top:678px;width:1px;height:3px;background:#000;"></div>
<div style="left:-69.5px;width:400px;text-align:center;top:682.54px;font-size:12px;line-height:12px;font-family:'Liberation Sans', sans-serif;white-space:pre;">800</div>
<div style="left:160px;top:678px;width:1px;height:3px;background:#000;"></div>
<div style="left:186px;top:678px;width:1px;height:3px;background:#000;"></div>
<div style="left:-13.5px;width:400px;text-align:center;top:682.54px;font-size:12px;line-height:12px;font-family:'Liberation Sans', sans-serif;white-space:pre;">1.0k</div>
<div style="left:363px;top:678px;width:1px;height:3px;background:#000;"></div>
<div style="left:163.5px;width:400px;text-align:center;top:682.54px;font-size:12px;line-height:12px;font-family:'Liberation Sans', sans-serif;white-space:pre;">2.0k</div>
<div style="left:466px;top:678px;width:1px;height:3px;background:#000;"></div>
<div style="left:266.5px;width:400px;text-align:center;top:682.54px;font-size:12px;line-height:12px;font-family:'Liberation Sans', sans-serif;white-space:pre;">3.0k</div>
<div style="left:539px;top:678px;width:1px;height:3px;background:#000;"></div>
<div style="left:339.5px;width:400px;text-align:center;top:682.54px;font-size:12px;line-height:12px;font-family:'Liberation Sans', sans-serif;white-space:pre;">4.0k</div>
<div style="left:596px;top:678px;width:1px;height:3px;background:#000;"></div>
<div style="left:396.5px;width:400px;text-align:center;top:682.54px;font-size:12px;line-height:12px;font-family:'Liberation Sans', sans-serif;white-space:pre;">5.0k</div>
<div style="left:642px;top:678px;width:1px;height:3px;background:#000;"></div>
<div style="left:442.5px;width:400px;text-align:center;top:682.54px;font-size:12px;line-height:12px;font-family:'Liberation Sans', sans-serif;white-space:pre;">6.0k</div>
<div style="left:681px;top:678px;width:1px;height:3px;background:#000;"></div>
<div style="left:481.5px;width:400px;text-align:center;top:682.54px;font-size:12px;line-height:12px;font-family:'Liberation Sans', sans-serif;white-space:pre;">7.0k</div>
<div style="left:715px;top:678px;width:1px;height:3px;background:#000;"></div>
<div style="left:515.5px;width:400px;text-align:center;top:682.54px;font-size:12px;line-height:12px;font-family:'Liberation Sans', sans-serif;white-space:pre;">8.0k</div>
<div style="left:745px;top:678px;width:1px;height:3px;background:#000;"></div>
<div style="left:772px;top:678px;width:1px;height:3px;background:#000;"></div>
<div style="left:572.5px;width:400px;text-align:center;top:682.54px;font-size:12px;line-height:12px;font-family:'Liberation Sans', sans-serif;white-space:pre;">10.0k</div>
<div style="left:312px;width:400px;text-align:center;top:694.84px;font-size:12px;line-height:12px;font-family:'Liberation Sans', sans-serif;white-space:pre;">Frequency (Hz)</div>
<svg style="position:absolute;left:8px;top:395px" width="16" height="56"><text transform="translate(13,53) rotate(-90)" x="0" y="0" font-family="Liberation Sans" font-size="12" fill="#000" textLength="50.5" lengthAdjust="spacingAndGlyphs">dBV rms</text></svg>
<div style="left:83px;top:666px;width:816px;height:12px;background:repeating-conic-gradient(#fff 0 25%, #ECE9D8 0 50%) 0 0/2px 2px;"></div>
<div style="left:66px;top:666px;width:17px;height:12px;background:#ECE9D8;box-shadow:inset 1px 1px 0 #fff, inset -1px -1px 0 #716F64, inset -2px -2px 0 #ACA899;"></div>
<svg style="position:absolute;left:66px;top:666px" width="17" height="12" viewBox="0 0 17 12"  shape-rendering="auto"><path d="M9.5,3 L9.5,9 L6.5,6 Z" fill="#000"/></svg>
<div style="left:99px;top:666px;width:17px;height:12px;background:#ECE9D8;box-shadow:inset 1px 1px 0 #fff, inset -1px -1px 0 #716F64, inset -2px -2px 0 #ACA899;"></div>
<div style="left:899px;top:666px;width:17px;height:12px;background:#ECE9D8;box-shadow:inset 1px 1px 0 #fff, inset -1px -1px 0 #716F64, inset -2px -2px 0 #ACA899;"></div>
<svg style="position:absolute;left:899px;top:666px" width="17" height="12" viewBox="0 0 17 12"  shape-rendering="auto"><path d="M7.5,3 L7.5,9 L10.5,6 Z" fill="#000"/></svg>
<div style="left:66px;top:678px;width:852px;height:2px;background:#fff;"></div>
<div style="left:64px;top:666px;width:2px;height:14px;background:#ACA899;"></div>
<div style="left:64px;top:666px;width:3px;height:1px;background:#000;"></div>
<div style="left:932px;top:696px;width:8px;height:8px;border:1px solid #000;box-shadow:inset 1px 1px 0 #fff,inset -1px -1px 0 #fff;background:#ECE9D8;"></div>
<div style="left:934px;top:700px;width:5px;height:1px;background:#000;"></div>
<div style="left:936px;top:698px;width:1px;height:5px;background:#000;"></div>
<div style="left:1008px;top:696px;width:8px;height:8px;border:1px solid #000;box-shadow:inset 1px 1px 0 #fff,inset -1px -1px 0 #fff;background:#ECE9D8;"></div>
<div style="left:1010px;top:700px;width:5px;height:1px;background:#000;"></div>
<svg style="position:absolute;left:884px;top:163.5px" width="19" height="29"><text x="2" y="25" font-family="Liberation Serif" font-weight="normal" font-style="italic" font-size="23" fill="#808080" stroke="#808080" stroke-width="0.6" textLength="15" lengthAdjust="spacingAndGlyphs">S</text></svg>
<svg style="position:absolute;left:900px;top:178px" width="12" height="11" viewBox="0 0 12 11"  shape-rendering="auto"><path d="M1.5,5.5 H10 M6.5,1.5 L4.5,10" stroke="#808080" stroke-width="1"/></svg>
<div style="left:944px;top:155px;font-size:12px;line-height:13px;text-decoration:underline;white-space:pre;">Overlays</div>
<div style="left:921px;top:171px;width:18px;height:13px;font-size:12px;line-height:13px;transform:rotate(-90deg);white-space:pre;">Set</div>
<div style="left:938px;top:172px;width:14px;height:13px;font-size:12px;line-height:13px;transform:rotate(-90deg);white-space:pre;">On</div>
<div style="left:923px;top:189px;width:13px;height:12px;background:#ECE9D8;border-right:1px solid #716F64;border-bottom:1px solid #716F64;box-shadow:inset 1px 1px 0 #fff, inset -1px -1px 0 #ACA899;font-size:12px;line-height:13px;text-align:center;">1</div>
<div style="left:940px;top:190px;width:9px;height:9px;background:#fff;border-left:2px solid #ACA899;border-top:2px solid #ACA899;border-right:1px solid #fff;border-bottom:1px solid #fff;box-shadow:inset 1px 1px 0 #716F64;"></div>
<div style="left:956px;top:190.84px;font-size:12px;line-height:12px;font-family:'Liberation Sans', sans-serif;white-space:pre;color:#008000;">Overlay 1</div>
<div style="left:923px;top:205px;width:13px;height:12px;background:#ECE9D8;border-right:1px solid #716F64;border-bottom:1px solid #716F64;box-shadow:inset 1px 1px 0 #fff, inset -1px -1px 0 #ACA899;font-size:12px;line-height:13px;text-align:center;">2</div>
<div style="left:940px;top:206px;width:9px;height:9px;background:#fff;border-left:2px solid #ACA899;border-top:2px solid #ACA899;border-right:1px solid #fff;border-bottom:1px solid #fff;box-shadow:inset 1px 1px 0 #716F64;"></div>
<div style="left:956px;top:206.84px;font-size:12px;line-height:12px;font-family:'Liberation Sans', sans-serif;white-space:pre;color:#00A0A0;">Overlay 2</div>
<div style="left:923px;top:221px;width:13px;height:12px;background:#ECE9D8;border-right:1px solid #716F64;border-bottom:1px solid #716F64;box-shadow:inset 1px 1px 0 #fff, inset -1px -1px 0 #ACA899;font-size:12px;line-height:13px;text-align:center;">3</div>
<div style="left:940px;top:222px;width:9px;height:9px;background:#fff;border-left:2px solid #ACA899;border-top:2px solid #ACA899;border-right:1px solid #fff;border-bottom:1px solid #fff;box-shadow:inset 1px 1px 0 #716F64;"></div>
<div style="left:956px;top:222.84px;font-size:12px;line-height:12px;font-family:'Liberation Sans', sans-serif;white-space:pre;color:#800080;">Overlay 3</div>
<div style="left:923px;top:237px;width:13px;height:12px;background:#ECE9D8;border-right:1px solid #716F64;border-bottom:1px solid #716F64;box-shadow:inset 1px 1px 0 #fff, inset -1px -1px 0 #ACA899;font-size:12px;line-height:13px;text-align:center;">4</div>
<div style="left:940px;top:238px;width:9px;height:9px;background:#fff;border-left:2px solid #ACA899;border-top:2px solid #ACA899;border-right:1px solid #fff;border-bottom:1px solid #fff;box-shadow:inset 1px 1px 0 #716F64;"></div>
<div style="left:956px;top:238.84px;font-size:12px;line-height:12px;font-family:'Liberation Sans', sans-serif;white-space:pre;color:#FF00FF;">Overlay 4</div>
<div style="left:923px;top:253px;width:13px;height:12px;background:#ECE9D8;border-right:1px solid #716F64;border-bottom:1px solid #716F64;box-shadow:inset 1px 1px 0 #fff, inset -1px -1px 0 #ACA899;font-size:12px;line-height:13px;text-align:center;">5</div>
<div style="left:940px;top:254px;width:9px;height:9px;background:#fff;border-left:2px solid #ACA899;border-top:2px solid #ACA899;border-right:1px solid #fff;border-bottom:1px solid #fff;box-shadow:inset 1px 1px 0 #716F64;"></div>
<div style="left:956px;top:254.84px;font-size:12px;line-height:12px;font-family:'Liberation Sans', sans-serif;white-space:pre;color:#804000;">Overlay 5</div>
<div style="left:923px;top:269px;width:13px;height:12px;background:#ECE9D8;border-right:1px solid #716F64;border-bottom:1px solid #716F64;box-shadow:inset 1px 1px 0 #fff, inset -1px -1px 0 #ACA899;font-size:12px;line-height:13px;text-align:center;">6</div>
<div style="left:940px;top:270px;width:9px;height:9px;background:#fff;border-left:2px solid #ACA899;border-top:2px solid #ACA899;border-right:1px solid #fff;border-bottom:1px solid #fff;box-shadow:inset 1px 1px 0 #716F64;"></div>
<div style="left:956px;top:270.84px;font-size:12px;line-height:12px;font-family:'Liberation Sans', sans-serif;white-space:pre;color:#FF0000;">Overlay 6</div>
<div style="left:923px;top:285px;width:13px;height:12px;background:#ECE9D8;border-right:1px solid #716F64;border-bottom:1px solid #716F64;box-shadow:inset 1px 1px 0 #fff, inset -1px -1px 0 #ACA899;font-size:12px;line-height:13px;text-align:center;">C</div>
<div style="left:940px;top:286px;width:9px;height:9px;background:#fff;border-left:2px solid #ACA899;border-top:2px solid #ACA899;border-right:1px solid #fff;border-bottom:1px solid #fff;box-shadow:inset 1px 1px 0 #716F64;"></div>
<div style="left:956px;top:286.84px;font-size:12px;line-height:12px;font-family:'Liberation Sans', sans-serif;white-space:pre;color:#000;">Composite</div>
<div style="left:920px;top:302px;width:62px;height:16px;background:#ECE9D8;border-right:1px solid #716F64;border-bottom:1px solid #716F64;box-shadow:inset 1px 1px 0 #fff, inset -1px -1px 0 #ACA899;"></div>
<div style="left:751.5px;width:400px;text-align:center;top:304.84px;font-size:12px;line-height:12px;font-family:'Liberation Sans', sans-serif;white-space:pre;">Options...</div>
<svg style="position:absolute;left:0;top:0;clip-path:inset(168px 108px 102px 66px)" width="1024" height="768" shape-rendering="crispEdges"><g fill="#0000FF"><rect x="66" y="564" width="1" height="1"/><rect x="67" y="564" width="1" height="1"/><rect x="68" y="564" width="1" height="1"/><rect x="69" y="564" width="1" height="1"/><rect x="70" y="564" width="1" height="1"/><rect x="71" y="564" width="1" height="2"/><rect x="72" y="565" width="1" height="1"/><rect x="73" y="565" width="1" height="1"/><rect x="74" y="564" width="1" height="2"/><rect x="75" y="564" width="1" height="1"/><rect x="76" y="564" width="1" height="1"/><rect x="77" y="564" width="1" height="1"/><rect x="78" y="564" width="1" height="1"/><rect x="79" y="564" width="1" height="2"/><rect x="80" y="565" width="1" height="1"/><rect x="81" y="565" width="1" height="1"/><rect x="82" y="565" width="1" height="1"/><rect x="83" y="565" width="1" height="1"/><rect x="84" y="564" width="1" height="2"/><rect x="85" y="564" width="1" height="1"/><rect x="86" y="564" width="1" height="1"/><rect x="87" y="564" width="1" height="1"/><rect x="88" y="564" width="1" height="2"/><rect x="89" y="564" width="1" height="2"/><rect x="90" y="564" width="1" height="1"/><rect x="91" y="564" width="1" height="3"/><rect x="92" y="566" width="1" height="1"/><rect x="93" y="566" width="1" height="1"/><rect x="94" y="565" width="1" height="2"/><rect x="95" y="565" width="1" height="1"/><rect x="96" y="565" width="1" height="1"/><rect x="97" y="565" width="1" height="1"/><rect x="98" y="564" width="1" height="2"/><rect x="99" y="564" width="1" height="1"/><rect x="100" y="564" width="1" height="1"/><rect x="101" y="563" width="1" height="2"/><rect x="102" y="562" width="1" height="2"/><rect x="103" y="562" width="1" height="1"/><rect x="104" y="562" width="1" height="2"/><rect x="105" y="563" width="1" height="1"/><rect x="106" y="563" width="1" height="3"/><rect x="107" y="565" width="1" height="1"/><rect x="108" y="565" width="1" height="1"/><rect x="109" y="565" width="1" height="1"/><rect x="110" y="565" width="1" height="1"/><rect x="111" y="562" width="1" height="4"/><rect x="112" y="562" width="1" height="1"/><rect x="113" y="562" width="1" height="1"/><rect x="114" y="558" width="1" height="5"/><rect x="115" y="558" width="1" height="8"/><rect x="116" y="565" width="1" height="1"/><rect x="117" y="565" width="1" height="1"/><rect x="118" y="565" width="1" height="1"/><rect x="119" y="565" width="1" height="1"/><rect x="120" y="565" width="1" height="1"/><rect x="121" y="565" width="1" height="1"/><rect x="122" y="565" width="1" height="1"/><rect x="123" y="565" width="1" height="1"/><rect x="124" y="565" width="1" height="1"/><rect x="125" y="565" width="1" height="1"/><rect x="126" y="565" width="1" height="1"/><rect x="127" y="565" width="1" height="1"/><rect x="128" y="562" width="1" height="4"/><rect x="129" y="562" width="1" height="1"/><rect x="130" y="562" width="1" height="1"/><rect x="131" y="562" width="1" height="1"/><rect x="132" y="562" width="1" height="1"/><rect x="133" y="562" width="1" height="1"/><rect x="134" y="562" width="1" height="1"/><rect x="135" y="562" width="1" height="1"/><rect x="136" y="562" width="1" height="4"/><rect x="137" y="565" width="1" height="1"/><rect x="138" y="564" width="1" height="2"/><rect x="139" y="564" width="1" height="1"/><rect x="140" y="564" width="1" height="1"/><rect x="141" y="564" width="1" height="3"/><rect x="142" y="566" width="1" height="1"/><rect x="143" y="566" width="1" height="1"/><rect x="144" y="562" width="1" height="5"/><rect x="145" y="562" width="1" height="1"/><rect x="146" y="562" width="1" height="1"/><rect x="147" y="562" width="1" height="1"/><rect x="148" y="562" width="1" height="1"/><rect x="149" y="562" width="1" height="1"/><rect x="150" y="562" width="1" height="1"/><rect x="151" y="562" width="1" height="2"/><rect x="152" y="563" width="1" height="1"/><rect x="153" y="563" width="1" height="1"/><rect x="154" y="563" width="1" height="3"/><rect x="155" y="565" width="1" height="1"/><rect x="156" y="563" width="1" height="3"/><rect x="157" y="563" width="1" height="1"/><rect x="158" y="563" width="1" height="2"/><rect x="159" y="564" width="1" height="1"/><rect x="160" y="564" width="1" height="1"/><rect x="161" y="564" width="1" height="1"/><rect x="162" y="564" width="1" height="1"/><rect x="163" y="563" width="1" height="2"/><rect x="164" y="563" width="1" height="1"/><rect x="165" y="563" width="1" height="1"/><rect x="166" y="563" width="1" height="3"/><rect x="167" y="565" width="1" height="1"/><rect x="168" y="564" width="1" height="2"/><rect x="169" y="564" width="1" height="1"/><rect x="170" y="563" width="1" height="2"/><rect x="171" y="563" width="1" height="1"/><rect x="172" y="563" width="1" height="3"/><rect x="173" y="565" width="1" height="1"/><rect x="174" y="562" width="1" height="4"/><rect x="175" y="562" width="1" height="3"/><rect x="176" y="564" width="1" height="1"/><rect x="177" y="564" width="1" height="1"/><rect x="178" y="564" width="1" height="1"/><rect x="179" y="564" width="1" height="1"/><rect x="180" y="564" width="1" height="1"/><rect x="181" y="564" width="1" height="1"/><rect x="182" y="562" width="1" height="3"/><rect x="183" y="504" width="1" height="59"/><rect x="184" y="504" width="1" height="1"/><rect x="185" y="504" width="1" height="62"/><rect x="186" y="565" width="1" height="1"/><rect x="187" y="565" width="1" height="2"/><rect x="188" y="566" width="1" height="1"/><rect x="189" y="561" width="1" height="6"/><rect x="190" y="561" width="1" height="5"/><rect x="191" y="565" width="1" height="1"/><rect x="192" y="562" width="1" height="4"/><rect x="193" y="562" width="1" height="3"/><rect x="194" y="564" width="1" height="1"/><rect x="195" y="564" width="1" height="1"/><rect x="196" y="564" width="1" height="1"/><rect x="197" y="564" width="1" height="1"/><rect x="198" y="564" width="1" height="3"/><rect x="199" y="566" width="1" height="1"/><rect x="200" y="566" width="1" height="1"/><rect x="201" y="566" width="1" height="1"/><rect x="202" y="564" width="1" height="3"/><rect x="203" y="563" width="1" height="2"/><rect x="204" y="562" width="1" height="2"/><rect x="205" y="562" width="1" height="3"/><rect x="206" y="564" width="1" height="1"/><rect x="207" y="564" width="1" height="1"/><rect x="208" y="564" width="1" height="1"/><rect x="209" y="564" width="1" height="1"/><rect x="210" y="564" width="1" height="1"/><rect x="211" y="564" width="1" height="1"/><rect x="212" y="564" width="1" height="1"/><rect x="213" y="563" width="1" height="2"/><rect x="214" y="563" width="1" height="1"/><rect x="215" y="563" width="1" height="1"/><rect x="216" y="563" width="1" height="1"/><rect x="217" y="561" width="1" height="3"/><rect x="218" y="561" width="1" height="1"/><rect x="219" y="561" width="1" height="1"/><rect x="220" y="561" width="1" height="3"/><rect x="221" y="563" width="1" height="1"/><rect x="222" y="563" width="1" height="1"/><rect x="223" y="562" width="1" height="2"/><rect x="224" y="562" width="1" height="1"/><rect x="225" y="562" width="1" height="1"/><rect x="226" y="562" width="1" height="2"/><rect x="227" y="563" width="1" height="1"/><rect x="228" y="563" width="1" height="1"/><rect x="229" y="563" width="1" height="1"/><rect x="230" y="562" width="1" height="2"/><rect x="231" y="562" width="1" height="1"/><rect x="232" y="562" width="1" height="1"/><rect x="233" y="562" width="1" height="4"/><rect x="234" y="565" width="1" height="1"/><rect x="235" y="563" width="1" height="3"/><rect x="236" y="563" width="1" height="1"/><rect x="237" y="563" width="1" height="1"/><rect x="238" y="563" width="1" height="3"/><rect x="239" y="565" width="1" height="1"/><rect x="240" y="565" width="1" height="1"/><rect x="241" y="565" width="1" height="1"/><rect x="242" y="562" width="1" height="4"/><rect x="243" y="562" width="1" height="2"/><rect x="244" y="563" width="1" height="1"/><rect x="245" y="563" width="1" height="1"/><rect x="246" y="563" width="1" height="1"/><rect x="247" y="562" width="1" height="2"/><rect x="248" y="562" width="1" height="1"/><rect x="249" y="562" width="1" height="1"/><rect x="250" y="562" width="1" height="1"/><rect x="251" y="562" width="1" height="2"/><rect x="252" y="563" width="1" height="3"/><rect x="253" y="565" width="1" height="1"/><rect x="254" y="565" width="1" height="1"/><rect x="255" y="565" width="1" height="1"/><rect x="256" y="565" width="1" height="1"/><rect x="257" y="565" width="1" height="1"/><rect x="258" y="565" width="1" height="1"/><rect x="259" y="565" width="1" height="1"/><rect x="260" y="562" width="1" height="4"/><rect x="261" y="562" width="1" height="1"/><rect x="262" y="562" width="1" height="1"/><rect x="263" y="562" width="1" height="1"/><rect x="264" y="562" width="1" height="1"/><rect x="265" y="562" width="1" height="1"/><rect x="266" y="562" width="1" height="1"/><rect x="267" y="562" width="1" height="1"/><rect x="268" y="562" width="1" height="1"/><rect x="269" y="562" width="1" height="1"/><rect x="270" y="560" width="1" height="3"/><rect x="271" y="560" width="1" height="1"/><rect x="272" y="560" width="1" height="1"/><rect x="273" y="560" width="1" height="1"/><rect x="274" y="560" width="1" height="3"/><rect x="275" y="562" width="1" height="1"/><rect x="276" y="562" width="1" height="3"/><rect x="277" y="564" width="1" height="1"/><rect x="278" y="564" width="1" height="1"/><rect x="279" y="562" width="1" height="3"/><rect x="280" y="562" width="1" height="1"/><rect x="281" y="562" width="1" height="5"/><rect x="282" y="566" width="1" height="1"/><rect x="283" y="564" width="1" height="3"/><rect x="284" y="564" width="1" height="1"/><rect x="285" y="564" width="1" height="1"/><rect x="286" y="564" width="1" height="1"/><rect x="287" y="564" width="1" height="1"/><rect x="288" y="564" width="1" height="1"/><rect x="289" y="560" width="1" height="5"/><rect x="290" y="560" width="1" height="5"/><rect x="291" y="564" width="1" height="1"/><rect x="292" y="564" width="1" height="1"/><rect x="293" y="564" width="1" height="1"/><rect x="294" y="562" width="1" height="3"/><rect x="295" y="562" width="1" height="1"/><rect x="296" y="562" width="1" height="3"/><rect x="297" y="564" width="1" height="1"/><rect x="298" y="564" width="1" height="1"/><rect x="299" y="564" width="1" height="1"/><rect x="300" y="564" width="1" height="1"/><rect x="301" y="564" width="1" height="1"/><rect x="302" y="564" width="1" height="1"/><rect x="303" y="562" width="1" height="3"/><rect x="304" y="562" width="1" height="1"/><rect x="305" y="562" width="1" height="1"/><rect x="306" y="562" width="1" height="3"/><rect x="307" y="564" width="1" height="1"/><rect x="308" y="564" width="1" height="1"/><rect x="309" y="564" width="1" height="1"/><rect x="310" y="564" width="1" height="1"/><rect x="311" y="562" width="1" height="3"/><rect x="312" y="560" width="1" height="3"/><rect x="313" y="560" width="1" height="1"/><rect x="314" y="560" width="1" height="1"/><rect x="315" y="560" width="1" height="1"/><rect x="316" y="560" width="1" height="3"/><rect x="317" y="562" width="1" height="1"/><rect x="318" y="562" width="1" height="1"/><rect x="319" y="562" width="1" height="1"/><rect x="320" y="562" width="1" height="1"/><rect x="321" y="562" width="1" height="1"/><rect x="322" y="562" width="1" height="1"/><rect x="323" y="562" width="1" height="1"/><rect x="324" y="562" width="1" height="1"/><rect x="325" y="562" width="1" height="1"/><rect x="326" y="562" width="1" height="3"/><rect x="327" y="564" width="1" height="3"/><rect x="328" y="566" width="1" height="1"/><rect x="329" y="564" width="1" height="3"/><rect x="330" y="564" width="1" height="1"/><rect x="331" y="564" width="1" height="1"/><rect x="332" y="564" width="1" height="1"/><rect x="333" y="564" width="1" height="1"/><rect x="334" y="564" width="1" height="1"/><rect x="335" y="562" width="1" height="3"/><rect x="336" y="562" width="1" height="3"/><rect x="337" y="564" width="1" height="1"/><rect x="338" y="564" width="1" height="1"/><rect x="339" y="564" width="1" height="1"/><rect x="340" y="564" width="1" height="1"/><rect x="341" y="564" width="1" height="1"/><rect x="342" y="564" width="1" height="1"/><rect x="343" y="564" width="1" height="1"/><rect x="344" y="557" width="1" height="8"/><rect x="345" y="557" width="1" height="4"/><rect x="346" y="560" width="1" height="1"/><rect x="347" y="560" width="1" height="5"/><rect x="348" y="564" width="1" height="1"/><rect x="349" y="564" width="1" height="1"/><rect x="350" y="562" width="1" height="3"/><rect x="351" y="562" width="1" height="1"/><rect x="352" y="560" width="1" height="3"/><rect x="353" y="560" width="1" height="1"/><rect x="354" y="560" width="1" height="1"/><rect x="355" y="560" width="1" height="1"/><rect x="356" y="560" width="1" height="1"/><rect x="357" y="560" width="1" height="3"/><rect x="358" y="562" width="1" height="1"/><rect x="359" y="562" width="1" height="1"/><rect x="360" y="553" width="1" height="10"/><rect x="361" y="553" width="1" height="10"/><rect x="362" y="562" width="1" height="1"/><rect x="363" y="562" width="1" height="3"/><rect x="364" y="564" width="1" height="1"/><rect x="365" y="564" width="1" height="1"/><rect x="366" y="564" width="1" height="1"/><rect x="367" y="562" width="1" height="3"/><rect x="368" y="562" width="1" height="1"/><rect x="369" y="562" width="1" height="1"/><rect x="370" y="562" width="1" height="1"/><rect x="371" y="562" width="1" height="1"/><rect x="372" y="562" width="1" height="1"/><rect x="373" y="562" width="1" height="5"/><rect x="374" y="566" width="1" height="1"/><rect x="375" y="564" width="1" height="3"/><rect x="376" y="564" width="1" height="1"/><rect x="377" y="564" width="1" height="1"/><rect x="378" y="564" width="1" height="1"/><rect x="379" y="564" width="1" height="1"/><rect x="380" y="562" width="1" height="3"/><rect x="381" y="562" width="1" height="3"/><rect x="382" y="564" width="1" height="1"/><rect x="383" y="564" width="1" height="3"/><rect x="384" y="562" width="1" height="5"/><rect x="385" y="562" width="1" height="1"/><rect x="386" y="562" width="1" height="1"/><rect x="387" y="562" width="1" height="1"/><rect x="388" y="562" width="1" height="1"/><rect x="389" y="562" width="1" height="3"/><rect x="390" y="564" width="1" height="1"/><rect x="391" y="564" width="1" height="1"/><rect x="392" y="564" width="1" height="1"/><rect x="393" y="564" width="1" height="1"/><rect x="394" y="564" width="1" height="1"/><rect x="395" y="564" width="1" height="1"/><rect x="396" y="562" width="1" height="3"/><rect x="397" y="562" width="1" height="1"/><rect x="398" y="562" width="1" height="1"/><rect x="399" y="562" width="1" height="1"/><rect x="400" y="562" width="1" height="3"/><rect x="401" y="562" width="1" height="3"/><rect x="402" y="562" width="1" height="1"/><rect x="403" y="562" width="1" height="1"/><rect x="404" y="562" width="1" height="1"/><rect x="405" y="562" width="1" height="3"/><rect x="406" y="564" width="1" height="1"/><rect x="407" y="564" width="1" height="1"/><rect x="408" y="562" width="1" height="3"/><rect x="409" y="562" width="1" height="3"/><rect x="410" y="564" width="1" height="1"/><rect x="411" y="564" width="1" height="1"/><rect x="412" y="562" width="1" height="3"/><rect x="413" y="562" width="1" height="1"/><rect x="414" y="562" width="1" height="1"/><rect x="415" y="562" width="1" height="1"/><rect x="416" y="562" width="1" height="3"/><rect x="417" y="564" width="1" height="1"/><rect x="418" y="564" width="1" height="1"/><rect x="419" y="564" width="1" height="1"/><rect x="420" y="564" width="1" height="1"/><rect x="421" y="564" width="1" height="1"/><rect x="422" y="564" width="1" height="1"/><rect x="423" y="564" width="1" height="1"/><rect x="424" y="564" width="1" height="1"/><rect x="425" y="559" width="1" height="6"/><rect x="426" y="559" width="1" height="6"/><rect x="427" y="562" width="1" height="3"/><rect x="428" y="562" width="1" height="1"/><rect x="429" y="562" width="1" height="1"/><rect x="430" y="562" width="1" height="1"/><rect x="431" y="562" width="1" height="1"/><rect x="432" y="562" width="1" height="1"/><rect x="433" y="562" width="1" height="1"/><rect x="434" y="562" width="1" height="1"/><rect x="435" y="562" width="1" height="3"/><rect x="436" y="564" width="1" height="1"/><rect x="437" y="564" width="1" height="1"/><rect x="438" y="564" width="1" height="1"/><rect x="439" y="564" width="1" height="1"/><rect x="440" y="562" width="1" height="3"/><rect x="441" y="562" width="1" height="1"/><rect x="442" y="562" width="1" height="3"/><rect x="443" y="562" width="1" height="3"/><rect x="444" y="562" width="1" height="1"/><rect x="445" y="562" width="1" height="3"/><rect x="446" y="562" width="1" height="3"/><rect x="447" y="562" width="1" height="1"/><rect x="448" y="562" width="1" height="1"/><rect x="449" y="562" width="1" height="1"/><rect x="450" y="562" width="1" height="3"/><rect x="451" y="562" width="1" height="3"/><rect x="452" y="562" width="1" height="1"/><rect x="453" y="562" width="1" height="1"/><rect x="454" y="562" width="1" height="1"/><rect x="455" y="562" width="1" height="1"/><rect x="456" y="562" width="1" height="1"/><rect x="457" y="560" width="1" height="3"/><rect x="458" y="560" width="1" height="1"/><rect x="459" y="560" width="1" height="1"/><rect x="460" y="560" width="1" height="5"/><rect x="461" y="564" width="1" height="1"/><rect x="462" y="564" width="1" height="1"/><rect x="463" y="557" width="1" height="8"/><rect x="464" y="557" width="1" height="10"/><rect x="465" y="566" width="1" height="1"/><rect x="466" y="566" width="1" height="1"/><rect x="467" y="566" width="1" height="1"/><rect x="468" y="566" width="1" height="1"/><rect x="469" y="564" width="1" height="3"/><rect x="470" y="564" width="1" height="1"/><rect x="471" y="564" width="1" height="1"/><rect x="472" y="564" width="1" height="1"/><rect x="473" y="564" width="1" height="1"/><rect x="474" y="564" width="1" height="1"/><rect x="475" y="564" width="1" height="1"/><rect x="476" y="562" width="1" height="3"/><rect x="477" y="562" width="1" height="1"/><rect x="478" y="562" width="1" height="1"/><rect x="479" y="562" width="1" height="1"/><rect x="480" y="562" width="1" height="1"/><rect x="481" y="562" width="1" height="1"/><rect x="482" y="562" width="1" height="3"/><rect x="483" y="564" width="1" height="1"/><rect x="484" y="564" width="1" height="1"/><rect x="485" y="564" width="1" height="1"/><rect x="486" y="564" width="1" height="1"/><rect x="487" y="564" width="1" height="1"/><rect x="488" y="560" width="1" height="5"/><rect x="489" y="560" width="1" height="1"/><rect x="490" y="560" width="1" height="1"/><rect x="491" y="560" width="1" height="1"/><rect x="492" y="560" width="1" height="5"/><rect x="493" y="564" width="1" height="1"/><rect x="494" y="564" width="1" height="1"/><rect x="495" y="564" width="1" height="1"/><rect x="496" y="564" width="1" height="1"/><rect x="497" y="564" width="1" height="1"/><rect x="498" y="564" width="1" height="1"/><rect x="499" y="564" width="1" height="1"/><rect x="500" y="564" width="1" height="1"/><rect x="501" y="562" width="1" height="3"/><rect x="502" y="562" width="1" height="1"/><rect x="503" y="562" width="1" height="1"/><rect x="504" y="562" width="1" height="3"/><rect x="505" y="564" width="1" height="2"/><rect x="506" y="565" width="1" height="1"/><rect x="507" y="565" width="1" height="1"/><rect x="508" y="565" width="1" height="1"/><rect x="509" y="561" width="1" height="5"/><rect x="510" y="561" width="1" height="1"/><rect x="511" y="561" width="1" height="1"/><rect x="512" y="561" width="1" height="1"/><rect x="513" y="561" width="1" height="1"/><rect x="514" y="561" width="1" height="2"/><rect x="515" y="562" width="1" height="1"/><rect x="516" y="560" width="1" height="3"/><rect x="517" y="560" width="1" height="2"/><rect x="518" y="561" width="1" height="1"/><rect x="519" y="561" width="1" height="1"/><rect x="520" y="561" width="1" height="1"/><rect x="521" y="560" width="1" height="2"/><rect x="522" y="560" width="1" height="5"/><rect x="523" y="564" width="1" height="1"/><rect x="524" y="563" width="1" height="2"/><rect x="525" y="562" width="1" height="2"/><rect x="526" y="562" width="1" height="4"/><rect x="527" y="562" width="1" height="4"/><rect x="528" y="562" width="1" height="1"/><rect x="529" y="562" width="1" height="1"/><rect x="530" y="562" width="1" height="1"/><rect x="531" y="561" width="1" height="2"/><rect x="532" y="561" width="1" height="1"/><rect x="533" y="561" width="1" height="1"/><rect x="534" y="561" width="1" height="1"/><rect x="535" y="561" width="1" height="1"/><rect x="536" y="561" width="1" height="1"/><rect x="537" y="560" width="1" height="2"/><rect x="538" y="560" width="1" height="1"/><rect x="539" y="560" width="1" height="1"/><rect x="540" y="560" width="1" height="2"/><rect x="541" y="561" width="1" height="1"/><rect x="542" y="561" width="1" height="3"/><rect x="543" y="563" width="1" height="1"/><rect x="544" y="563" width="1" height="2"/><rect x="545" y="564" width="1" height="1"/><rect x="546" y="560" width="1" height="5"/><rect x="547" y="560" width="1" height="4"/><rect x="548" y="563" width="1" height="1"/><rect x="549" y="563" width="1" height="1"/><rect x="550" y="563" width="1" height="2"/><rect x="551" y="564" width="1" height="1"/><rect x="552" y="564" width="1" height="2"/><rect x="553" y="565" width="1" height="1"/><rect x="554" y="565" width="1" height="1"/><rect x="555" y="562" width="1" height="4"/><rect x="556" y="562" width="1" height="2"/><rect x="557" y="563" width="1" height="1"/><rect x="558" y="563" width="1" height="1"/><rect x="559" y="563" width="1" height="1"/><rect x="560" y="563" width="1" height="3"/><rect x="561" y="565" width="1" height="1"/><rect x="562" y="563" width="1" height="3"/><rect x="563" y="561" width="1" height="3"/><rect x="564" y="561" width="1" height="1"/><rect x="565" y="561" width="1" height="3"/><rect x="566" y="562" width="1" height="2"/><rect x="567" y="562" width="1" height="1"/><rect x="568" y="562" width="1" height="1"/><rect x="569" y="562" width="1" height="2"/><rect x="570" y="563" width="1" height="1"/><rect x="571" y="563" width="1" height="1"/><rect x="572" y="563" width="1" height="1"/><rect x="573" y="563" width="1" height="1"/><rect x="574" y="563" width="1" height="1"/><rect x="575" y="563" width="1" height="1"/><rect x="576" y="563" width="1" height="1"/><rect x="577" y="562" width="1" height="2"/><rect x="578" y="562" width="1" height="1"/><rect x="579" y="561" width="1" height="2"/><rect x="580" y="561" width="1" height="2"/><rect x="581" y="562" width="1" height="1"/><rect x="582" y="562" width="1" height="1"/><rect x="583" y="562" width="1" height="1"/><rect x="584" y="562" width="1" height="1"/><rect x="585" y="562" width="1" height="2"/><rect x="586" y="563" width="1" height="1"/><rect x="587" y="563" width="1" height="1"/><rect x="588" y="562" width="1" height="2"/><rect x="589" y="562" width="1" height="1"/><rect x="590" y="562" width="1" height="1"/><rect x="591" y="562" width="1" height="1"/><rect x="592" y="562" width="1" height="1"/><rect x="593" y="562" width="1" height="2"/><rect x="594" y="563" width="1" height="1"/><rect x="595" y="563" width="1" height="1"/><rect x="596" y="563" width="1" height="3"/><rect x="597" y="565" width="1" height="1"/><rect x="598" y="560" width="1" height="6"/><rect x="599" y="560" width="1" height="1"/><rect x="600" y="560" width="1" height="3"/><rect x="601" y="562" width="1" height="1"/><rect x="602" y="562" width="1" height="1"/><rect x="603" y="562" width="1" height="1"/><rect x="604" y="562" width="1" height="1"/><rect x="605" y="562" width="1" height="2"/><rect x="606" y="562" width="1" height="2"/><rect x="607" y="562" width="1" height="1"/><rect x="608" y="562" width="1" height="1"/><rect x="609" y="562" width="1" height="1"/><rect x="610" y="562" width="1" height="2"/><rect x="611" y="563" width="1" height="1"/><rect x="612" y="563" width="1" height="1"/><rect x="613" y="563" width="1" height="1"/><rect x="614" y="563" width="1" height="1"/><rect x="615" y="563" width="1" height="1"/><rect x="616" y="563" width="1" height="1"/><rect x="617" y="563" width="1" height="1"/><rect x="618" y="563" width="1" height="1"/><rect x="619" y="563" width="1" height="1"/><rect x="620" y="563" width="1" height="1"/><rect x="621" y="563" width="1" height="1"/><rect x="622" y="561" width="1" height="3"/><rect x="623" y="561" width="1" height="1"/><rect x="624" y="561" width="1" height="2"/><rect x="625" y="562" width="1" height="1"/><rect x="626" y="562" width="1" height="1"/><rect x="627" y="562" width="1" height="1"/><rect x="628" y="562" width="1" height="1"/><rect x="629" y="562" width="1" height="1"/><rect x="630" y="562" width="1" height="1"/><rect x="631" y="561" width="1" height="2"/><rect x="632" y="561" width="1" height="1"/><rect x="633" y="561" width="1" height="1"/><rect x="634" y="553" width="1" height="9"/><rect x="635" y="553" width="1" height="11"/><rect x="636" y="563" width="1" height="1"/><rect x="637" y="563" width="1" height="1"/><rect x="638" y="561" width="1" height="3"/><rect x="639" y="561" width="1" height="1"/><rect x="640" y="561" width="1" height="3"/><rect x="641" y="563" width="1" height="1"/><rect x="642" y="563" width="1" height="1"/><rect x="643" y="563" width="1" height="1"/><rect x="644" y="563" width="1" height="1"/><rect x="645" y="563" width="1" height="1"/><rect x="646" y="563" width="1" height="2"/><rect x="647" y="564" width="1" height="1"/><rect x="648" y="564" width="1" height="1"/><rect x="649" y="562" width="1" height="3"/><rect x="650" y="562" width="1" height="3"/><rect x="651" y="564" width="1" height="1"/><rect x="652" y="564" width="1" height="1"/><rect x="653" y="564" width="1" height="1"/><rect x="654" y="564" width="1" height="1"/><rect x="655" y="564" width="1" height="1"/><rect x="656" y="564" width="1" height="1"/><rect x="657" y="562" width="1" height="3"/><rect x="658" y="562" width="1" height="1"/><rect x="659" y="562" width="1" height="3"/><rect x="660" y="564" width="1" height="1"/><rect x="661" y="564" width="1" height="1"/><rect x="662" y="562" width="1" height="3"/><rect x="663" y="562" width="1" height="1"/><rect x="664" y="562" width="1" height="3"/><rect x="665" y="562" width="1" height="3"/><rect x="666" y="562" width="1" height="3"/><rect x="667" y="560" width="1" height="5"/><rect x="668" y="560" width="1" height="2"/><rect x="669" y="561" width="1" height="1"/><rect x="670" y="561" width="1" height="1"/><rect x="671" y="561" width="1" height="1"/><rect x="672" y="561" width="1" height="1"/><rect x="673" y="560" width="1" height="2"/><rect x="674" y="551" width="1" height="10"/><rect x="675" y="551" width="1" height="11"/><rect x="676" y="561" width="1" height="2"/><rect x="677" y="562" width="1" height="1"/><rect x="678" y="562" width="1" height="1"/><rect x="679" y="562" width="1" height="1"/><rect x="680" y="562" width="1" height="1"/><rect x="681" y="561" width="1" height="2"/><rect x="682" y="561" width="1" height="1"/><rect x="683" y="561" width="1" height="4"/><rect x="684" y="564" width="1" height="1"/><rect x="685" y="562" width="1" height="3"/><rect x="686" y="562" width="1" height="1"/><rect x="687" y="562" width="1" height="3"/><rect x="688" y="564" width="1" height="1"/><rect x="689" y="564" width="1" height="1"/><rect x="690" y="564" width="1" height="1"/><rect x="691" y="564" width="1" height="1"/><rect x="692" y="563" width="1" height="2"/><rect x="693" y="563" width="1" height="1"/><rect x="694" y="560" width="1" height="4"/><rect x="695" y="560" width="1" height="1"/><rect x="696" y="560" width="1" height="5"/><rect x="697" y="564" width="1" height="2"/><rect x="698" y="564" width="1" height="2"/><rect x="699" y="563" width="1" height="2"/><rect x="700" y="563" width="1" height="1"/><rect x="701" y="563" width="1" height="1"/><rect x="702" y="563" width="1" height="1"/><rect x="703" y="563" width="1" height="1"/><rect x="704" y="559" width="1" height="5"/><rect x="705" y="559" width="1" height="4"/><rect x="706" y="562" width="1" height="2"/><rect x="707" y="560" width="1" height="4"/><rect x="708" y="560" width="1" height="1"/><rect x="709" y="560" width="1" height="1"/><rect x="710" y="558" width="1" height="3"/><rect x="711" y="558" width="1" height="3"/><rect x="712" y="560" width="1" height="1"/><rect x="713" y="560" width="1" height="3"/><rect x="714" y="562" width="1" height="1"/><rect x="715" y="562" width="1" height="1"/><rect x="716" y="558" width="1" height="5"/><rect x="717" y="558" width="1" height="1"/><rect x="718" y="558" width="1" height="1"/><rect x="719" y="555" width="1" height="4"/><rect x="720" y="555" width="1" height="8"/><rect x="721" y="562" width="1" height="1"/><rect x="722" y="559" width="1" height="4"/><rect x="723" y="559" width="1" height="1"/><rect x="724" y="559" width="1" height="3"/><rect x="725" y="561" width="1" height="1"/><rect x="726" y="561" width="1" height="1"/><rect x="727" y="561" width="1" height="1"/><rect x="728" y="561" width="1" height="1"/><rect x="729" y="561" width="1" height="2"/><rect x="730" y="562" width="1" height="1"/><rect x="731" y="559" width="1" height="4"/><rect x="732" y="558" width="1" height="2"/><rect x="733" y="558" width="1" height="1"/><rect x="734" y="558" width="1" height="3"/><rect x="735" y="560" width="1" height="1"/><rect x="736" y="560" width="1" height="1"/><rect x="737" y="560" width="1" height="1"/><rect x="738" y="559" width="1" height="2"/><rect x="739" y="558" width="1" height="2"/><rect x="740" y="558" width="1" height="2"/><rect x="741" y="559" width="1" height="2"/><rect x="742" y="559" width="1" height="2"/><rect x="743" y="558" width="1" height="2"/><rect x="744" y="558" width="1" height="1"/><rect x="745" y="558" width="1" height="1"/><rect x="746" y="558" width="1" height="1"/><rect x="747" y="558" width="1" height="1"/><rect x="748" y="558" width="1" height="2"/><rect x="749" y="558" width="1" height="2"/><rect x="750" y="558" width="1" height="1"/><rect x="751" y="556" width="1" height="3"/><rect x="752" y="556" width="1" height="1"/><rect x="753" y="556" width="1" height="1"/><rect x="754" y="555" width="1" height="2"/><rect x="755" y="555" width="1" height="1"/><rect x="756" y="555" width="1" height="1"/><rect x="757" y="555" width="1" height="1"/><rect x="758" y="555" width="1" height="1"/><rect x="759" y="554" width="1" height="2"/><rect x="760" y="553" width="1" height="2"/><rect x="761" y="552" width="1" height="2"/><rect x="762" y="551" width="1" height="2"/><rect x="763" y="549" width="1" height="3"/><rect x="764" y="547" width="1" height="3"/><rect x="765" y="545" width="1" height="3"/><rect x="766" y="542" width="1" height="4"/><rect x="767" y="538" width="1" height="5"/><rect x="768" y="534" width="1" height="5"/><rect x="769" y="530" width="1" height="5"/><rect x="770" y="527" width="1" height="4"/><rect x="771" y="519" width="1" height="9"/><rect x="772" y="492" width="1" height="28"/><rect x="773" y="224" width="1" height="269"/><rect x="774" y="224" width="1" height="214"/><rect x="775" y="437" width="1" height="70"/><rect x="776" y="506" width="1" height="17"/><rect x="777" y="522" width="1" height="6"/><rect x="778" y="527" width="1" height="6"/><rect x="779" y="532" width="1" height="5"/><rect x="780" y="536" width="1" height="6"/><rect x="781" y="541" width="1" height="2"/><rect x="782" y="542" width="1" height="3"/><rect x="783" y="544" width="1" height="2"/><rect x="784" y="545" width="1" height="1"/><rect x="785" y="545" width="1" height="2"/><rect x="786" y="546" width="1" height="1"/><rect x="787" y="546" width="1" height="1"/><rect x="788" y="544" width="1" height="3"/><rect x="789" y="543" width="1" height="2"/><rect x="790" y="541" width="1" height="3"/><rect x="791" y="539" width="1" height="3"/><rect x="792" y="536" width="1" height="4"/><rect x="793" y="534" width="1" height="3"/><rect x="794" y="529" width="1" height="6"/><rect x="795" y="524" width="1" height="6"/><rect x="796" y="510" width="1" height="15"/><rect x="797" y="222" width="1" height="289"/><rect x="798" y="222" width="1" height="246"/><rect x="799" y="467" width="1" height="44"/><rect x="800" y="510" width="1" height="8"/><rect x="801" y="517" width="1" height="5"/><rect x="802" y="521" width="1" height="7"/><rect x="803" y="527" width="1" height="8"/><rect x="804" y="534" width="1" height="5"/><rect x="805" y="538" width="1" height="4"/><rect x="806" y="541" width="1" height="4"/><rect x="807" y="544" width="1" height="3"/><rect x="808" y="546" width="1" height="2"/><rect x="809" y="547" width="1" height="3"/><rect x="810" y="549" width="1" height="2"/><rect x="811" y="550" width="1" height="2"/><rect x="812" y="551" width="1" height="2"/><rect x="813" y="552" width="1" height="2"/><rect x="814" y="553" width="1" height="2"/><rect x="815" y="554" width="1" height="1"/><rect x="816" y="554" width="1" height="1"/><rect x="817" y="554" width="1" height="3"/><rect x="818" y="556" width="1" height="1"/><rect x="819" y="556" width="1" height="1"/><rect x="820" y="556" width="1" height="1"/><rect x="821" y="556" width="1" height="3"/><rect x="822" y="558" width="1" height="1"/><rect x="823" y="557" width="1" height="2"/><rect x="824" y="557" width="1" height="3"/><rect x="825" y="559" width="1" height="2"/><rect x="826" y="559" width="1" height="2"/><rect x="827" y="559" width="1" height="1"/><rect x="828" y="559" width="1" height="2"/><rect x="829" y="560" width="1" height="2"/><rect x="830" y="561" width="1" height="2"/><rect x="831" y="562" width="1" height="1"/><rect x="832" y="562" width="1" height="3"/><rect x="833" y="561" width="1" height="4"/><rect x="834" y="561" width="1" height="1"/><rect x="835" y="561" width="1" height="1"/><rect x="836" y="561" width="1" height="1"/><rect x="837" y="561" width="1" height="1"/><rect x="838" y="561" width="1" height="2"/><rect x="839" y="562" width="1" height="3"/><rect x="840" y="553" width="1" height="12"/><rect x="841" y="553" width="1" height="12"/><rect x="842" y="561" width="1" height="4"/><rect x="843" y="561" width="1" height="1"/><rect x="844" y="561" width="1" height="1"/><rect x="845" y="561" width="1" height="4"/><rect x="846" y="564" width="1" height="1"/><rect x="847" y="564" width="1" height="1"/><rect x="848" y="564" width="1" height="1"/><rect x="849" y="564" width="1" height="1"/><rect x="850" y="560" width="1" height="5"/><rect x="851" y="560" width="1" height="5"/><rect x="852" y="564" width="1" height="1"/><rect x="853" y="562" width="1" height="3"/><rect x="854" y="562" width="1" height="2"/><rect x="855" y="563" width="1" height="3"/><rect x="856" y="565" width="1" height="1"/><rect x="857" y="565" width="1" height="1"/><rect x="858" y="565" width="1" height="1"/><rect x="859" y="563" width="1" height="3"/><rect x="860" y="563" width="1" height="1"/><rect x="861" y="563" width="1" height="1"/><rect x="862" y="561" width="1" height="3"/><rect x="863" y="555" width="1" height="7"/><rect x="864" y="555" width="1" height="7"/><rect x="865" y="561" width="1" height="1"/><rect x="866" y="561" width="1" height="1"/><rect x="867" y="561" width="1" height="1"/><rect x="868" y="551" width="1" height="11"/><rect x="869" y="551" width="1" height="14"/><rect x="870" y="562" width="1" height="3"/><rect x="871" y="562" width="1" height="1"/><rect x="872" y="562" width="1" height="1"/><rect x="873" y="562" width="1" height="3"/><rect x="874" y="564" width="1" height="1"/><rect x="875" y="564" width="1" height="1"/><rect x="876" y="564" width="1" height="1"/><rect x="877" y="564" width="1" height="1"/><rect x="878" y="564" width="1" height="1"/><rect x="879" y="561" width="1" height="4"/><rect x="880" y="561" width="1" height="1"/><rect x="881" y="551" width="1" height="11"/><rect x="882" y="551" width="1" height="12"/><rect x="883" y="562" width="1" height="1"/><rect x="884" y="555" width="1" height="8"/><rect x="885" y="555" width="1" height="8"/><rect x="886" y="562" width="1" height="1"/><rect x="887" y="562" width="1" height="1"/><rect x="888" y="562" width="1" height="1"/><rect x="889" y="561" width="1" height="2"/><rect x="890" y="561" width="1" height="1"/><rect x="891" y="561" width="1" height="1"/><rect x="892" y="561" width="1" height="5"/><rect x="893" y="562" width="1" height="4"/><rect x="894" y="562" width="1" height="1"/><rect x="895" y="562" width="1" height="1"/><rect x="896" y="562" width="1" height="1"/><rect x="897" y="562" width="1" height="1"/><rect x="898" y="562" width="1" height="1"/><rect x="899" y="562" width="1" height="1"/><rect x="900" y="556" width="1" height="7"/><rect x="901" y="556" width="1" height="8"/><rect x="902" y="561" width="1" height="3"/><rect x="903" y="561" width="1" height="1"/><rect x="904" y="561" width="1" height="1"/><rect x="905" y="561" width="1" height="1"/><rect x="906" y="561" width="1" height="1"/><rect x="907" y="560" width="1" height="2"/><rect x="908" y="560" width="1" height="1"/><rect x="909" y="560" width="1" height="3"/><rect x="910" y="562" width="1" height="1"/><rect x="911" y="562" width="1" height="2"/><rect x="912" y="561" width="1" height="3"/><rect x="913" y="561" width="1" height="1"/><rect x="914" y="561" width="1" height="1"/><rect x="915" y="561" width="1" height="2"/><rect x="747" y="517" width="2" height="42"/><rect x="819" y="506" width="2" height="51"/><rect x="773" y="224" width="2" height="214"/><rect x="797" y="222" width="2" height="246"/><rect x="360" y="553" width="2" height="10"/></g></svg>
<svg style="position:absolute;left:231px;top:347.6px" width="224" height="28"><text x="2" y="24" font-family="Liberation Sans" font-weight="normal" font-style="normal" font-size="22" fill="#000" textLength="220" lengthAdjust="spacingAndGlyphs">ВК-SAPR+коррBGG</text></svg>
<svg style="position:absolute;left:231px;top:374px" width="181" height="28"><text x="2" y="24" font-family="Liberation Sans" font-weight="normal" font-style="normal" font-size="22" fill="#000" textLength="177" lengthAdjust="spacingAndGlyphs">Рвых пик = 75W</text></svg>
<svg style="position:absolute;left:436.5px;top:374px" width="116.0" height="28"><text x="2" y="24" font-family="Liberation Sans" font-weight="normal" font-style="normal" font-size="22" fill="#000" textLength="112.0" lengthAdjust="spacingAndGlyphs">Rн = 4 Ом</text></svg>
<div style="left:231px;top:223px;width:232px;height:74px;background:#0046D5;border-radius:2px 2px 0 0;"></div>
<div style="left:231px;top:223px;width:232px;height:22px;background:linear-gradient(to bottom,#0A5FEF 0%,#2B7BFF 15%,#0058EE 40%,#0054E3 80%,#0046C8 100%);border-radius:3px 3px 0 0;"></div>
<div style="left:235px;top:245px;width:224px;height:48px;background:#fff;border:1px solid #000;box-sizing:border-box;"></div>
<svg style="position:absolute;left:233.2px;top:227px" width="26.600000000000023" height="17"><text x="2" y="13" font-family="Liberation Sans" font-weight="bold" font-style="normal" font-size="11" fill="#fff" textLength="22.600000000000023" lengthAdjust="spacingAndGlyphs">IMD</text></svg>
<div style="left:444px;top:229px;width:11px;height:11px;border:1px solid #fff;border-radius:2px;background:#E8623C;"></div>
<svg style="position:absolute;left:444px;top:229px" width="13" height="13" viewBox="0 0 13 13"  shape-rendering="auto"><path d="M3.5,3.5 L9.5,9.5 M9.5,3.5 L3.5,9.5" stroke="#fff" stroke-width="1.8"/></svg>
<div style="left:511px;top:223px;width:205px;height:74px;background:#7A96DF;border-radius:2px 2px 0 0;"></div>
<div style="left:511px;top:223px;width:205px;height:22px;background:linear-gradient(to bottom,#9DB9EB 0%,#8AA8E6 20%,#7A96DF 60%,#7F9EE3 100%);border-radius:3px 3px 0 0;"></div>
<div style="left:515px;top:245px;width:197px;height:48px;background:#fff;border:1px solid #000;box-sizing:border-box;"></div>
<svg style="position:absolute;left:513.2px;top:227px" width="92.5" height="17"><text x="2" y="13" font-family="Liberation Sans" font-weight="bold" font-style="normal" font-size="11" fill="#D8E4F8" textLength="88.5" lengthAdjust="spacingAndGlyphs">Peak Amplitude</text></svg>
<div style="left:697px;top:229px;width:11px;height:11px;border:1px solid #fff;border-radius:2px;background:#B07080;"></div>
<svg style="position:absolute;left:697px;top:229px" width="13" height="13" viewBox="0 0 13 13"  shape-rendering="auto"><path d="M3.5,3.5 L9.5,9.5 M9.5,3.5 L3.5,9.5" stroke="#fff" stroke-width="1.8"/></svg>
<svg style="position:absolute;left:236.5px;top:246.2px" width="205.0" height="42"><text x="2" y="38" font-family="Liberation Sans" font-weight="normal" font-style="normal" font-size="36" fill="#000" textLength="201.0" lengthAdjust="spacingAndGlyphs">0.001220 %</text></svg>
<svg style="position:absolute;left:516.5px;top:246.2px" width="193.5" height="42"><text x="2" y="38" font-family="Liberation Sans" font-weight="normal" font-style="normal" font-size="36" fill="#000" textLength="189.5" lengthAdjust="spacingAndGlyphs">-10.31 dBV</text></svg>
<div style="left:0px;top:708px;width:1024px;height:1px;background:#ECE9D8;"></div>
<div style="left:0px;top:709px;width:1024px;height:1px;background:#fff;"></div>
<div style="left:0px;top:710px;width:1024px;height:28px;background:#ECE9D8;"></div>
<div style="left:0px;top:737px;width:1024px;height:1px;background:#fff;"></div>
<div style="left:5px;top:713px;width:116px;height:16px;border-left:1px solid #8D8A7E;border-top:1px solid #8D8A7E;border-right:1px solid #E3E0D2;border-bottom:1px solid #E3E0D2;"></div>
<div style="left:9px;top:715.84px;font-size:12px;line-height:12px;font-family:'Liberation Sans', sans-serif;white-space:pre;">Stopped</div>
<div style="left:125px;top:713px;width:100px;height:16px;border-left:1px solid #8D8A7E;border-top:1px solid #8D8A7E;border-right:1px solid #E3E0D2;border-bottom:1px solid #E3E0D2;"></div>
<div style="left:129px;top:715.84px;font-size:12px;line-height:12px;font-family:'Liberation Sans', sans-serif;white-space:pre;">Real Time</div>
<div style="left:228px;top:713px;width:69px;height:16px;border-left:1px solid #8D8A7E;border-top:1px solid #8D8A7E;border-right:1px solid #E3E0D2;border-bottom:1px solid #E3E0D2;"></div>
<div style="left:232px;top:715.84px;font-size:12px;line-height:12px;font-family:'Liberation Sans', sans-serif;white-space:pre;">96000 Hz</div>
<div style="left:301px;top:713px;width:50px;height:16px;border-left:1px solid #8D8A7E;border-top:1px solid #8D8A7E;border-right:1px solid #E3E0D2;border-bottom:1px solid #E3E0D2;"></div>
<div style="left:305px;top:715.84px;font-size:12px;line-height:12px;font-family:'Liberation Sans', sans-serif;white-space:pre;">24 Bit</div>
<div style="left:354px;top:713px;width:50px;height:16px;border-left:1px solid #8D8A7E;border-top:1px solid #8D8A7E;border-right:1px solid #E3E0D2;border-bottom:1px solid #E3E0D2;"></div>
<div style="left:358px;top:715.84px;font-size:12px;line-height:12px;font-family:'Liberation Sans', sans-serif;white-space:pre;">Stereo</div>
<div style="left:407px;top:713px;width:100px;height:16px;border-left:1px solid #8D8A7E;border-top:1px solid #8D8A7E;border-right:1px solid #E3E0D2;border-bottom:1px solid #E3E0D2;"></div>
<div style="left:411px;top:715.84px;font-size:12px;line-height:12px;font-family:'Liberation Sans', sans-serif;white-space:pre;">FFT 131072 pts</div>
<div style="left:510px;top:713px;width:72px;height:16px;border-left:1px solid #8D8A7E;border-top:1px solid #8D8A7E;border-right:1px solid #E3E0D2;border-bottom:1px solid #E3E0D2;"></div>
<div style="left:514px;top:715.84px;font-size:12px;line-height:12px;font-family:'Liberation Sans', sans-serif;white-space:pre;">Hanning</div>
<div style="left:585px;top:713px;width:433px;height:16px;border-left:1px solid #8D8A7E;border-top:1px solid #8D8A7E;border-right:1px solid #E3E0D2;border-bottom:1px solid #E3E0D2;"></div>
<div style="left:0px;top:708px;width:1px;height:30px;background:#ACA899;"></div>
<div style="left:1px;top:708px;width:1px;height:30px;background:#9D9A8C;"></div>
<div style="left:0px;top:738px;width:1024px;height:30px;background:linear-gradient(to bottom,#1D4BC9 0px,#3A8AEC 1px,#4895EA 2px,#2E76E2 3px,#2259DC 4px,#225ADA 12px,#2462DF 22px,#2563DF 28px,#1941A5 29px,#1941A5 30px);"></div>
<div style="left:0;top:738px;width:96px;height:30px;border-radius:0 11px 11px 0;background:linear-gradient(to bottom,#3A8A3A 0px,#5DBB5D 2px,#4AAE4A 5px,#3FA33F 12px,#389A38 22px,#2F862F 28px,#2B7A2B 30px);box-shadow:inset -2px 0 3px rgba(0,50,0,0.6), inset 0 -1px 1px rgba(0,40,0,0.5);"></div>
<svg style="position:absolute;left:9px;top:743px" width="22" height="19" viewBox="0 0 22 19"  shape-rendering="auto"><path d="M4.5,2.5 Q8,0.5 12.5,2 L11,9.5 Q7,8 3,9.5 Z" fill="#F0641E"/><path d="M13,2.2 Q16.5,3.5 20.5,2.5 L19,10 Q15,11 11.5,9.8 Z" fill="#7CC52A"/><path d="M2.8,10 Q7,8.6 10.8,10 L9.5,17 Q5.5,15.8 1.3,17.3 Z" fill="#3C8CF0"/><path d="M11.5,10.5 Q15,11.8 18.8,10.8 L17.5,18 Q13.5,19 10.3,17.5 Z" fill="#FFC81E"/></svg>
<svg style="position:absolute;left:33px;top:742px" width="46" height="24"><text x="2.5" y="17.5" font-family="Liberation Sans" font-weight="bold" font-style="italic" font-size="20" fill="#1E4E1E" opacity="0.7" textLength="38" lengthAdjust="spacingAndGlyphs">пуск</text><text x="2" y="17" font-family="Liberation Sans" font-weight="bold" font-style="italic" font-size="20" fill="#fff" textLength="38" lengthAdjust="spacingAndGlyphs">пуск</text></svg>
<div style="left:105px;top:742px;width:160px;height:23px;border-radius:3px;background:#1E4FC6;box-shadow:inset 1px 1px 1px #11307F, inset -1px -1px 0 #2C5FD8;"></div>
<svg style="position:absolute;left:116px;top:746px" width="16" height="16" viewBox="0 0 16 16"  shape-rendering="auto"><rect x="0" y="0" width="16" height="16" fill="#222"/><rect x="1" y="1" width="14" height="14" fill="#fff"/><rect x="3" y="1" width="1" height="14" fill="#C8C8C8"/><rect x="1" y="3" width="14" height="1" fill="#C8C8C8"/><rect x="6" y="1" width="1" height="14" fill="#C8C8C8"/><rect x="1" y="6" width="14" height="1" fill="#C8C8C8"/><rect x="9" y="1" width="1" height="14" fill="#C8C8C8"/><rect x="1" y="9" width="14" height="1" fill="#C8C8C8"/><rect x="12" y="1" width="1" height="14" fill="#C8C8C8"/><rect x="1" y="12" width="14" height="1" fill="#C8C8C8"/><polyline points="1,2.5 5.5,1.5 7.5,4.5 10.5,3 15,8" fill="none" stroke="#FF4040" stroke-width="1.3"/><polyline points="1,4 4,4 5.5,2.5 6,6 9,6.5 10.5,5 13.5,9.5 15,12" fill="none" stroke="#0000FF" stroke-width="1.5"/><rect x="2" y="9" width="12" height="6" fill="#fff" opacity="0.6"/><text x="3" y="14.8" font-family="Liberation Serif" font-style="italic" font-weight="bold" font-size="9.5" fill="#000" stroke="#000" stroke-width="0.4" textLength="10.5" lengthAdjust="spacingAndGlyphs">SC</text></svg>
<svg style="position:absolute;left:134px;top:744.3px" width="114" height="18"><text x="2" y="14" font-family="Liberation Sans" font-weight="normal" font-style="normal" font-size="12" fill="#fff" textLength="110" lengthAdjust="spacingAndGlyphs">SpectraPLUS-SC Sou...</text></svg>
<div style="left:266px;top:742px;width:158px;height:23px;border-radius:3px;background:linear-gradient(to bottom,#3F8AF5 0%,#3C81F3 40%,#3677EC 100%);box-shadow:inset -1px -1px 1px #2050C0, inset 1px 1px 0 #60A0FF;"></div>
<svg style="position:absolute;left:275px;top:744px" width="16" height="20" viewBox="0 0 16 20"  shape-rendering="auto"><path d="M3,7 L13,7 L12,18 L4,18 Z" fill="#D0D0D0" stroke="#707070"/><path d="M5,2 L7,13" stroke="#E04020" stroke-width="1.6"/><path d="M8,1 L8.5,13" stroke="#30B030" stroke-width="1.6"/><path d="M12,2 L10,13" stroke="#F0A020" stroke-width="1.6"/><path d="M4,10 L12,10" stroke="#3060E0" stroke-width="1.2"/></svg>
<svg style="position:absolute;left:292.5px;top:744.3px" width="119.5" height="18"><text x="2" y="14" font-family="Liberation Sans" font-weight="normal" font-style="normal" font-size="12" fill="#fff" textLength="115.5" lengthAdjust="spacingAndGlyphs">ВК- 10кГц -sapr +bgg...</text></svg>
<div style="left:838px;top:745px;width:16px;height:16px;background:#3C75DC;"></div>
<svg style="position:absolute;left:837px;top:744.3px" width="18" height="18"><text x="2" y="14" font-family="Liberation Sans" font-weight="normal" font-style="normal" font-size="12" fill="#fff" textLength="14" lengthAdjust="spacingAndGlyphs">RU</text></svg>
<svg style="position:absolute;left:859px;top:745px" width="18" height="17" viewBox="0 0 18 17"  shape-rendering="crispEdges"><rect x="1.5" y="7.5" width="15" height="8" fill="#fff" stroke="#000"/><path d="M3,9.5 h1 M5,9.5 h1 M7,9.5 h1 M9,9.5 h1 M11,9.5 h1 M13,9.5 h1 M4,11.5 h1 M6,11.5 h1 M8,11.5 h1 M10,11.5 h1 M12,11.5 h1 M4,13.5 h9" stroke="#505050" stroke-width="1"/><path d="M8.5,7 L8.5,5 Q10,3 11,5 Q12,7 13,4 Q14,1.5 15,3" stroke="#000" fill="none"/></svg>
<div style="left:895px;top:738px;width:129px;height:30px;background:linear-gradient(to bottom,#0C59B9 0px,#18B4F5 1px,#16A5F2 3px,#0F94EA 8px,#0E93E8 22px,#0D86DF 28px,#0A6AC3 30px);border-left:1px solid #0A4FAE;box-shadow:inset 1px 0 0 #1AA8F0;"></div>
<svg style="position:absolute;left:905px;top:744px" width="18" height="19" viewBox="0 0 18 19"  shape-rendering="auto"><rect x="6.5" y="1.5" width="8" height="7" fill="#2A3070" stroke="#B0B0D8"/><rect x="2.5" y="5.5" width="8" height="7" fill="#2A3070" stroke="#B0B0D8"/><ellipse cx="6" cy="15.5" rx="4" ry="2" fill="#E0E0F0"/><path d="M10,11 L16,17 M16,11 L10,17" stroke="#E02020" stroke-width="2.2"/></svg>
<svg style="position:absolute;left:923px;top:744px" width="18" height="18" viewBox="0 0 18 18"  shape-rendering="auto"><path d="M3,4 Q6,0 11,2 Q14,5 13,10 Q11,15 6,14 Q2,12 2,8 Z" fill="#9A9A9A" stroke="#404040"/><ellipse cx="8.5" cy="8" rx="3.2" ry="3.6" fill="#5A5A70" stroke="#303030"/><ellipse cx="8" cy="7.5" rx="1.2" ry="1.4" fill="#B0B0C8"/><path d="M3.5,5 Q5,2.5 8,2.5" stroke="#F0F0F0" fill="none"/><path d="M10,15.5 Q14,14.5 16,10.5 M11,17.5 Q16,16 17.5,11" stroke="#C8C8F8" fill="none" stroke-width="1.1"/></svg>
<svg style="position:absolute;left:942px;top:743px" width="16" height="18" viewBox="0 0 16 18"  shape-rendering="auto"><path d="M2,11 L11,8 L15,12 L6,16 Z" fill="#909090" stroke="#303030"/><path d="M6,12 L11,10.5 L12.5,12 L7.5,14 Z" fill="#D0D0D0"/><path d="M3,2 L8,4 L8,1.5 L12,6 L7,9.5 L7.5,7 L3,6 Z" fill="#3CD01E" stroke="#1A8010" stroke-width="0.6"/></svg>
<svg style="position:absolute;left:959px;top:744px" width="18" height="18" viewBox="0 0 18 18"  shape-rendering="auto"><circle cx="9" cy="9" r="8" fill="#3CB83C"/><path d="M3,6 Q6,1 12,2" stroke="#A0F0A0" fill="none" stroke-width="1.2"/><circle cx="10.5" cy="10" r="6" fill="#6A1FB0" stroke="#fff" stroke-width="1.3"/><text x="10.5" y="13.5" font-size="9" text-anchor="middle" fill="#fff" font-family="Liberation Sans">8</text><rect x="2" y="9" width="3" height="3" fill="#fff"/></svg>
<svg style="position:absolute;left:982px;top:744.3px" width="31" height="18"><text x="2" y="14" font-family="Liberation Sans" font-weight="normal" font-style="normal" font-size="12" fill="#fff" textLength="27" lengthAdjust="spacingAndGlyphs">11:07</text></svg>
</body></html>
